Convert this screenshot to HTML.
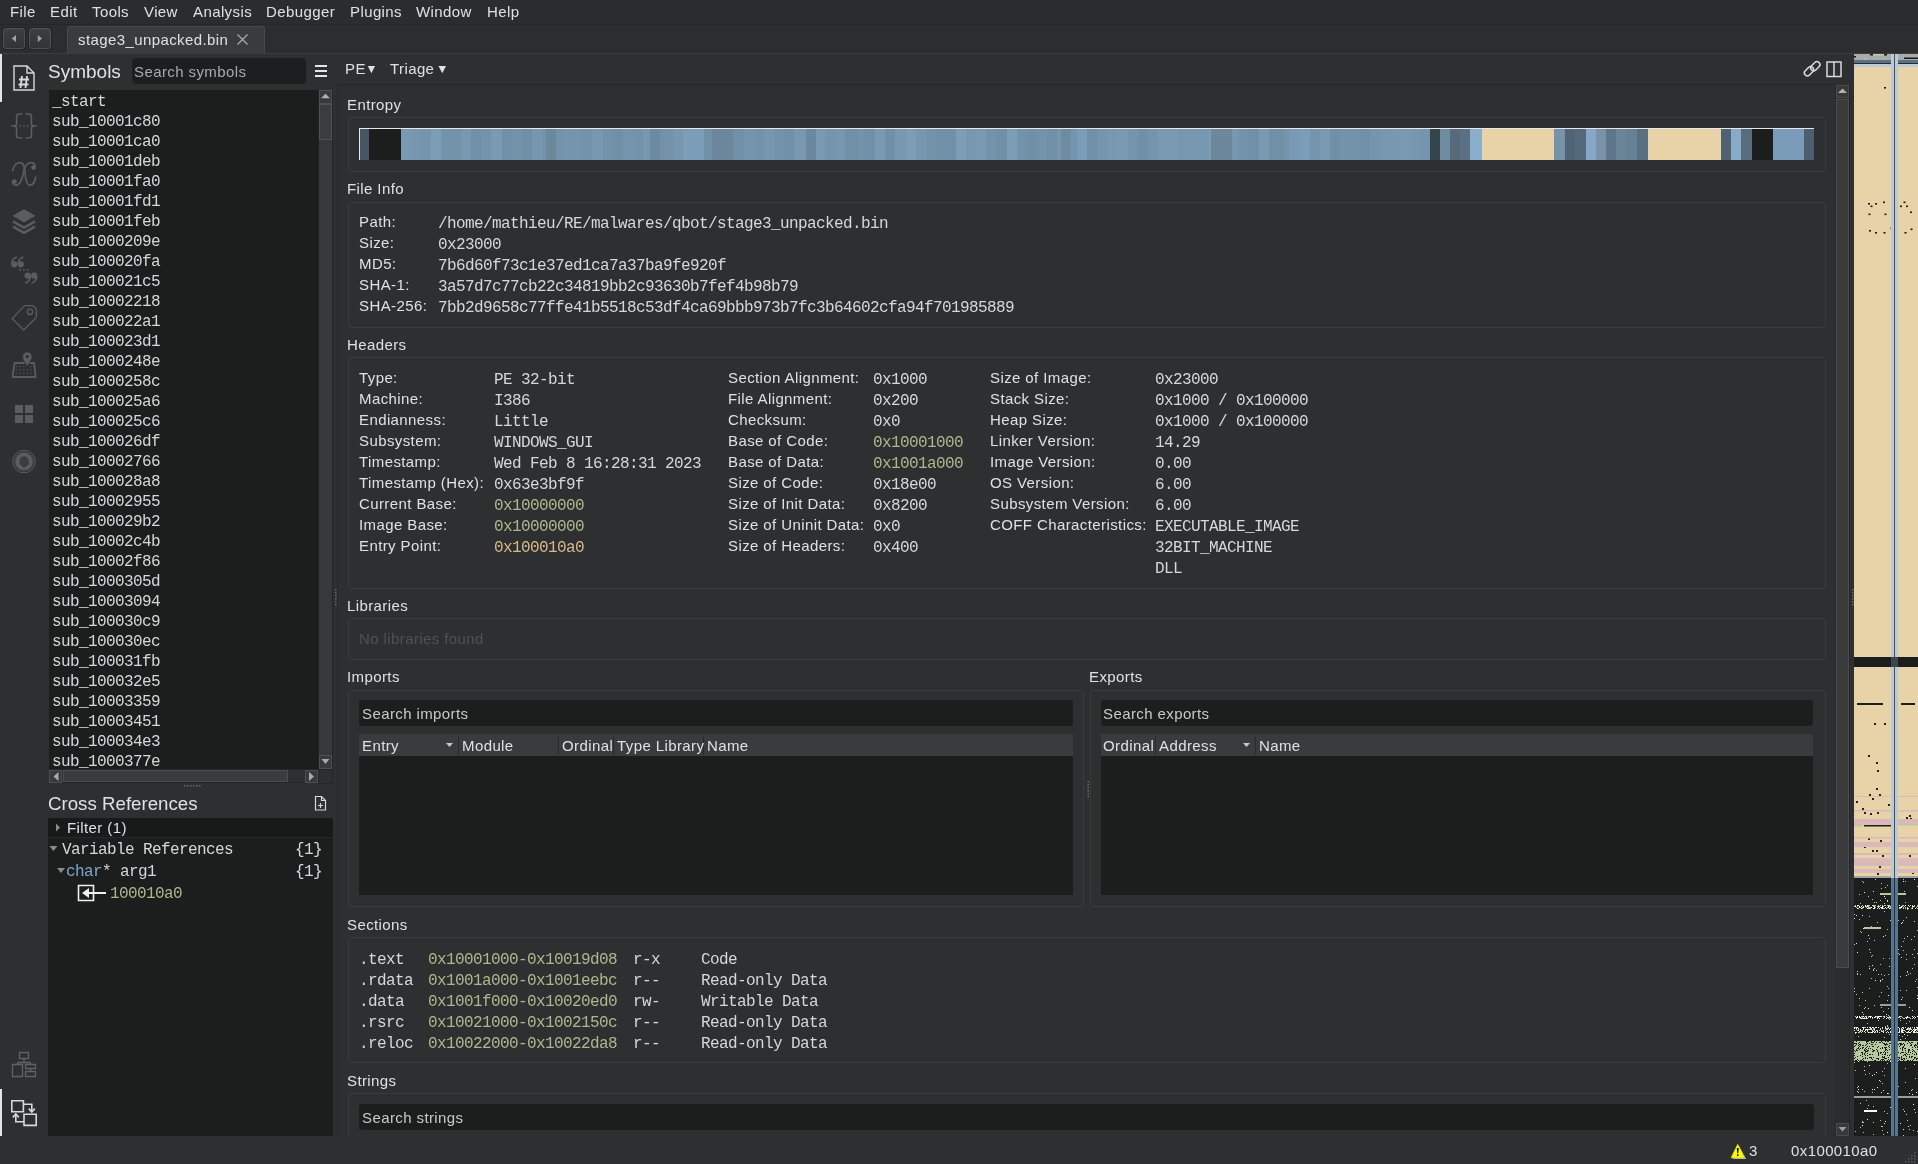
<!DOCTYPE html>
<html><head><meta charset="utf-8"><title>Binary Ninja</title>
<style>
html,body{margin:0;padding:0;}
body{width:1918px;height:1164px;overflow:hidden;position:relative;background:#2e2f31;font-family:"Liberation Sans",sans-serif;}
.r{position:absolute;box-sizing:border-box;}
.t{position:absolute;white-space:pre;line-height:20px;}
.s{font-family:"Liberation Sans",sans-serif;letter-spacing:0.4px;}
#root{position:absolute;left:0;top:0;width:1918px;height:1164px;will-change:transform;overflow:hidden;}
.m{font-family:"Liberation Mono",monospace;letter-spacing:-0.6px;}
svg{position:absolute;overflow:visible;}
</style></head><body><div id="root">
<div class="r" style="left:0px;top:0px;width:1918px;height:24px;background:#2b2c2e;"></div>
<div class="t s" style="left:10px;top:2px;font-size:15px;color:#dde1e6;">File</div>
<div class="t s" style="left:50px;top:2px;font-size:15px;color:#dde1e6;">Edit</div>
<div class="t s" style="left:92px;top:2px;font-size:15px;color:#dde1e6;">Tools</div>
<div class="t s" style="left:144px;top:2px;font-size:15px;color:#dde1e6;">View</div>
<div class="t s" style="left:193px;top:2px;font-size:15px;color:#dde1e6;">Analysis</div>
<div class="t s" style="left:266px;top:2px;font-size:15px;color:#dde1e6;">Debugger</div>
<div class="t s" style="left:350px;top:2px;font-size:15px;color:#dde1e6;">Plugins</div>
<div class="t s" style="left:416px;top:2px;font-size:15px;color:#dde1e6;">Window</div>
<div class="t s" style="left:487px;top:2px;font-size:15px;color:#dde1e6;">Help</div>
<div class="r" style="left:0px;top:24px;width:1918px;height:30px;background:#2c2d2f;border-top:1px solid #252628;"></div>
<div class="r" style="left:3px;top:28px;width:22px;height:21px;background:linear-gradient(#3d3e40,#333436);border:1px solid #505153;border-radius:3px;box-shadow:0 0 0 1px #222325;"></div>
<div class="r" style="left:29px;top:28px;width:22px;height:21px;background:linear-gradient(#3d3e40,#333436);border:1px solid #505153;border-radius:3px;box-shadow:0 0 0 1px #222325;"></div>
<svg style="left:0;top:0" width="1" height="1"><polygon points="11.8,38.5 16,35 16,42" fill="#a3a4a6"/><polygon points="37.8,35 42,38.5 37.8,42" fill="#a3a4a6"/></svg>
<div class="r" style="left:67px;top:26px;width:198px;height:28px;background:#3a3b3d;border:1px solid #48494b;border-bottom:none;border-radius:3px 3px 0 0;"></div>
<div class="t s" style="left:78px;top:30px;font-size:15px;color:#dde1e6;">stage3_unpacked.bin</div>
<svg style="left:0;top:0" width="1" height="1"><path d="M237.5,34.5 L247.5,44.5 M247.5,34.5 L237.5,44.5" stroke="#a8a9ab" stroke-width="1.3"/></svg>
<div class="r" style="left:0px;top:53px;width:67px;height:1px;background:#3c3d3f;"></div>
<div class="r" style="left:265px;top:53px;width:1653px;height:1px;background:#3c3d3f;"></div>
<div class="r" style="left:0px;top:54px;width:48px;height:1082px;background:#2e2f31;"></div>
<div class="r" style="left:0px;top:54px;width:2px;height:48px;background:#dfe3ea;"></div>
<div class="r" style="left:0px;top:1089px;width:2px;height:48px;background:#dfe3ea;"></div>

<svg style="left:0;top:0" width="1" height="1">
 <!-- symbols doc # -->
 <path d="M14,66 L27,66 L34,73 L34,90 L14,90 Z M27,66 L27,73 L34,73" fill="none" stroke="#d6d8db" stroke-width="1.4"/>
 <path d="M22,76 L20.5,88 M27,76 L25.5,88 M19,79.5 H29 M18.5,84.5 H28.5" stroke="#d6d8db" stroke-width="1.9" fill="none"/>
 <!-- braces -->
 <path d="M22.4,114 H19 Q16.6,114 16.6,116.4 V123.4 Q16.6,126 14,126 H11.2 M14,126 Q16.6,126 16.6,128.6 V135.6 Q16.6,138 19,138 H22.4 M25.6,114 H29 Q31.4,114 31.4,116.4 V123.4 Q31.4,126 34,126 H36.8 M34,126 Q31.4,126 31.4,128.6 V135.6 Q31.4,138 29,138 H25.6" fill="none" stroke="#5a5d60" stroke-width="1.6"/>
 <rect x="19.3" y="125.2" width="1.6" height="1.6" fill="#5a5d60"/><rect x="23.2" y="125.2" width="1.6" height="1.6" fill="#5a5d60"/><rect x="27.1" y="125.2" width="1.6" height="1.6" fill="#5a5d60"/>
 <!-- x -->
 <path d="M12.6,170.5 C14,164.5 17.5,162.2 20.5,162.6 C24,163.1 24.8,168 25,172 C25.5,180 27,185.2 30,185.2 C33,185.2 35,181 35.6,177" fill="none" stroke="#5a5d60" stroke-width="1.7" stroke-linecap="round"/>
 <path d="M35.2,168 C35.3,163.8 33,162.4 30.8,162.6 C27,163 24,167 23.5,172 C22.4,180 19.2,185.2 16,185.2 C13.5,185.2 12.2,183.5 12.6,181" fill="none" stroke="#5a5d60" stroke-width="1.7" stroke-linecap="round"/>
 <circle cx="33.5" cy="167.6" r="2.3" fill="#5a5d60"/><circle cx="14.4" cy="181.6" r="2.3" fill="#5a5d60"/>
 <!-- layers -->
 <polygon points="24,209.2 35.5,215.8 24,222.4 12.5,215.8" fill="#5a5d60"/>
 <path d="M13,221.3 L24,227.6 L35,221.3 M13,226.6 L24,232.9 L35,226.6" fill="none" stroke="#5a5d60" stroke-width="2.5"/>
 <!-- quotes -->
 <circle cx="14.3" cy="264.3" r="3.1" fill="#5a5d60"/><circle cx="20.8" cy="264.3" r="3.1" fill="#5a5d60"/>
 <path d="M11.6,264 C11.8,260.5 13.5,258 17,257 M18.1,264 C18.3,260.5 20,258 23.5,257" fill="none" stroke="#5a5d60" stroke-width="1.6"/>
 <circle cx="27.6" cy="275.6" r="3.1" fill="#5a5d60"/><circle cx="34.1" cy="275.6" r="3.1" fill="#5a5d60"/>
 <path d="M30.4,276 C30.2,279.5 28.5,282 25,283 M36.9,276 C36.7,279.5 35,282 31.5,283" fill="none" stroke="#5a5d60" stroke-width="1.6"/>
 <rect x="19.3" y="269" width="1.7" height="1.7" fill="#5a5d60"/><rect x="23.1" y="269" width="1.7" height="1.7" fill="#5a5d60"/><rect x="26.9" y="269" width="1.7" height="1.7" fill="#5a5d60"/>
 <!-- tag -->
 <path d="M12.2,318.6 L24.6,305.6 L33,305.6 L36.4,309.2 L36.4,317.4 L23.6,330 Z" fill="none" stroke="#5a5d60" stroke-width="1.3" stroke-linejoin="round"/>
 <circle cx="30" cy="311.8" r="2.7" fill="none" stroke="#5a5d60" stroke-width="1.3"/>
 <!-- map -->
 <path d="M14.6,363 L12.5,377 L35.6,377 L34.1,363 Z" fill="none" stroke="#5a5d60" stroke-width="1.8" stroke-linejoin="round"/>
 <path d="M16,366.5 h17 M16,370 h17 M16,373.5 h17" stroke="#5a5d60" stroke-width="0.9" stroke-dasharray="1.2,2.4" />
 <path d="M27.3,366.5 C24,361 22.6,359.5 22.6,356.6 a4.7,4.7 0 0 1 9.4,0 C32,359.5 30.6,361 27.3,366.5 Z" fill="#5a5d60" stroke="#2e2f31" stroke-width="0.8"/>
 <circle cx="27.3" cy="356.6" r="1.6" fill="#2e2f31"/>
 <!-- grid -->
 <rect x="15" y="405" width="8" height="8" fill="#5a5d60"/><rect x="25" y="405" width="8" height="8" fill="#5a5d60"/>
 <rect x="15" y="415" width="8" height="8" fill="#5a5d60"/><rect x="25" y="415" width="8" height="8" fill="#5a5d60"/>
 <!-- bug circle -->
 <circle cx="24" cy="461.6" r="11.3" fill="none" stroke="#5a5d60" stroke-width="1"/>
 <circle cx="24" cy="461.6" r="9" fill="#5a5d60"/>
 <circle cx="24" cy="461.6" r="9.8" fill="none" stroke="#45474a" stroke-width="0.8"/>
 <path d="M20,458 L24,456 L28,458 L29,464 L24,468 L19.5,464 Z" fill="#3a3c3f"/>
 <!-- hierarchy -->
 <path d="M19.5,1052.5 h9 v6 h-9 Z M24,1058.5 v4 M17.5,1062.5 h13 M17.5,1062.5 v2 M30.5,1062.5 v2 M12.5,1064.5 h10 v12 h-10 Z M25.5,1064.5 h10 v4 h-10 Z M30.5,1068.5 v3 M25.5,1071.5 h10 v5 h-10 Z" fill="none" stroke="#606264" stroke-width="1.3"/>
 <!-- xref -->
 <path d="M11.8,1100.8 h11.6 v11 h-11.6 Z M24,1114.2 h12.2 v11.2 h-12.2 Z M23.4,1104.3 h8.4 v7 M24,1121.8 h-8.2 v-7.2" fill="none" stroke="#d6d8db" stroke-width="1.6"/>
 <path d="M28.8,1108.6 L31.8,1112 L34.8,1108.6 M12.8,1117.4 L15.8,1114 L18.8,1117.4" fill="none" stroke="#d6d8db" stroke-width="1.6"/>
</svg>
<div class="r" style="left:48px;top:54px;width:285px;height:36px;background:#2e2f31;"></div>
<div class="t s" style="left:48px;top:62px;font-size:19px;color:#dfe1e4;letter-spacing:0">Symbols</div>
<div class="r" style="left:132px;top:58px;width:174px;height:26px;background:#1d1e1f;border-radius:4px;"></div>
<div class="t s" style="left:134px;top:62px;font-size:15px;color:#a9aaac;">Search symbols</div>
<svg style="left:0;top:0" width="1" height="1"><path d="M315,66 h12 M315,71 h12 M315,76 h12" stroke="#e2e5e9" stroke-width="1.8"/></svg>
<div class="r" style="left:49px;top:90px;width:269px;height:679px;background:#1c1d1d;"></div>
<div class="t m" style="left:52px;top:92px;font-size:16px;color:#d4d8dc;">_start</div>
<div class="t m" style="left:52px;top:112px;font-size:16px;color:#d4d8dc;">sub_10001c80</div>
<div class="t m" style="left:52px;top:132px;font-size:16px;color:#d4d8dc;">sub_10001ca0</div>
<div class="t m" style="left:52px;top:152px;font-size:16px;color:#d4d8dc;">sub_10001deb</div>
<div class="t m" style="left:52px;top:172px;font-size:16px;color:#d4d8dc;">sub_10001fa0</div>
<div class="t m" style="left:52px;top:192px;font-size:16px;color:#d4d8dc;">sub_10001fd1</div>
<div class="t m" style="left:52px;top:212px;font-size:16px;color:#d4d8dc;">sub_10001feb</div>
<div class="t m" style="left:52px;top:232px;font-size:16px;color:#d4d8dc;">sub_1000209e</div>
<div class="t m" style="left:52px;top:252px;font-size:16px;color:#d4d8dc;">sub_100020fa</div>
<div class="t m" style="left:52px;top:272px;font-size:16px;color:#d4d8dc;">sub_100021c5</div>
<div class="t m" style="left:52px;top:292px;font-size:16px;color:#d4d8dc;">sub_10002218</div>
<div class="t m" style="left:52px;top:312px;font-size:16px;color:#d4d8dc;">sub_100022a1</div>
<div class="t m" style="left:52px;top:332px;font-size:16px;color:#d4d8dc;">sub_100023d1</div>
<div class="t m" style="left:52px;top:352px;font-size:16px;color:#d4d8dc;">sub_1000248e</div>
<div class="t m" style="left:52px;top:372px;font-size:16px;color:#d4d8dc;">sub_1000258c</div>
<div class="t m" style="left:52px;top:392px;font-size:16px;color:#d4d8dc;">sub_100025a6</div>
<div class="t m" style="left:52px;top:412px;font-size:16px;color:#d4d8dc;">sub_100025c6</div>
<div class="t m" style="left:52px;top:432px;font-size:16px;color:#d4d8dc;">sub_100026df</div>
<div class="t m" style="left:52px;top:452px;font-size:16px;color:#d4d8dc;">sub_10002766</div>
<div class="t m" style="left:52px;top:472px;font-size:16px;color:#d4d8dc;">sub_100028a8</div>
<div class="t m" style="left:52px;top:492px;font-size:16px;color:#d4d8dc;">sub_10002955</div>
<div class="t m" style="left:52px;top:512px;font-size:16px;color:#d4d8dc;">sub_100029b2</div>
<div class="t m" style="left:52px;top:532px;font-size:16px;color:#d4d8dc;">sub_10002c4b</div>
<div class="t m" style="left:52px;top:552px;font-size:16px;color:#d4d8dc;">sub_10002f86</div>
<div class="t m" style="left:52px;top:572px;font-size:16px;color:#d4d8dc;">sub_1000305d</div>
<div class="t m" style="left:52px;top:592px;font-size:16px;color:#d4d8dc;">sub_10003094</div>
<div class="t m" style="left:52px;top:612px;font-size:16px;color:#d4d8dc;">sub_100030c9</div>
<div class="t m" style="left:52px;top:632px;font-size:16px;color:#d4d8dc;">sub_100030ec</div>
<div class="t m" style="left:52px;top:652px;font-size:16px;color:#d4d8dc;">sub_100031fb</div>
<div class="t m" style="left:52px;top:672px;font-size:16px;color:#d4d8dc;">sub_100032e5</div>
<div class="t m" style="left:52px;top:692px;font-size:16px;color:#d4d8dc;">sub_10003359</div>
<div class="t m" style="left:52px;top:712px;font-size:16px;color:#d4d8dc;">sub_10003451</div>
<div class="t m" style="left:52px;top:732px;font-size:16px;color:#d4d8dc;">sub_100034e3</div>
<div class="t m" style="left:52px;top:752px;font-size:16px;color:#d4d8dc;">sub_1000377e</div>
<div class="r" style="left:318px;top:90px;width:15px;height:679px;background:#37383a;border-left:1px solid #202122;border-right:1px solid #242527;"></div>
<div class="r" style="left:319px;top:90px;width:13px;height:14px;background:#38393b;border:1px solid #4e4f51;"></div>
<div class="r" style="left:319px;top:104px;width:13px;height:36px;background:#3b3c3e;border:1px solid #505153;"></div>
<div class="r" style="left:319px;top:755px;width:13px;height:14px;background:#38393b;border:1px solid #4e4f51;"></div>
<svg style="left:0;top:0" width="1" height="1"><polygon points="321,98.2 325.5,93.8 330,98.2" fill="#b0b1b3"/><polygon points="321.5,759 325.5,764 329.5,759" fill="#a8a9ab"/></svg>
<div class="r" style="left:49px;top:769px;width:284px;height:14px;background:#2e2f31;border-top:1px solid #242526;border-bottom:1px solid #242526;"></div>
<div class="r" style="left:49px;top:770px;width:13px;height:13px;background:#38393b;border:1px solid #4e4f51;"></div>
<div class="r" style="left:63px;top:770px;width:225px;height:12px;background:#3a3b3d;border:1px solid #4c4d4f;"></div>
<div class="r" style="left:305px;top:770px;width:13px;height:13px;background:#38393b;border:1px solid #4e4f51;"></div>
<div class="r" style="left:318px;top:769px;width:15px;height:15px;background:#2e2f31;border:1px solid #242526;"></div>
<svg style="left:0;top:0" width="1" height="1"><polygon points="58.5,772 53.5,776.5 58.5,781" fill="#a8a9ab"/><polygon points="309,772 314,776.5 309,781" fill="#a8a9ab"/></svg>
<svg style="left:0;top:0" width="1" height="1"><rect x="184" y="785" width="1.5" height="1.5" fill="#6a6b6d"/><rect x="187" y="785" width="1.5" height="1.5" fill="#6a6b6d"/><rect x="190" y="785" width="1.5" height="1.5" fill="#6a6b6d"/><rect x="193" y="785" width="1.5" height="1.5" fill="#6a6b6d"/><rect x="196" y="785" width="1.5" height="1.5" fill="#6a6b6d"/><rect x="199" y="785" width="1.5" height="1.5" fill="#6a6b6d"/></svg>
<div class="t s" style="left:48px;top:794px;font-size:18.7px;color:#dfe1e4;letter-spacing:0">Cross References</div>
<svg style="left:0;top:0" width="1" height="1"><path d="M315.5,796.5 h6 l4,4 v9.5 h-10 Z M321.5,796.5 v4 h4" fill="none" stroke="#d6d8db" stroke-width="1.2"/><path d="M320.5,803 v5 M318,805.5 h5" stroke="#d6d8db" stroke-width="1.2"/></svg>
<div class="r" style="left:48px;top:818px;width:285px;height:318px;background:#1c1d1d;"></div>
<div class="r" style="left:48px;top:818px;width:285px;height:19px;background:#181919;"></div>
<div class="r" style="left:48px;top:837px;width:285px;height:1px;background:#262728;"></div>
<svg style="left:0;top:0" width="1" height="1"><polygon points="56,823.5 60,827.5 56,831.5" fill="#8a8b8d"/><polygon points="49.5,846 57.5,846 53.5,851" fill="#8a8b8d"/><polygon points="57,868 65,868 61,873" fill="#8a8b8d"/></svg>
<div class="t s" style="left:67px;top:818px;font-size:15px;color:#dde1e6;">Filter (1)</div>
<div class="t m" style="left:62px;top:840px;font-size:16px;color:#d4d8dc;">Variable References</div>
<div class="t m" style="left:295px;top:840px;font-size:16px;color:#d4d8dc;">{1}</div>
<div class="t m" style="left:66px;top:862px;font-size:16px;color:#7ea5c8;">char</div>
<div class="t m" style="left:102px;top:862px;font-size:16px;color:#d4d8dc;">* arg1</div>
<div class="t m" style="left:295px;top:862px;font-size:16px;color:#d4d8dc;">{1}</div>
<svg style="left:0;top:0" width="1" height="1"><path d="M78.5,885.5 h15 v15 h-15 Z" fill="none" stroke="#f0f0f0" stroke-width="1.6"/><path d="M84,893 h22" stroke="#f0f0f0" stroke-width="2"/><polygon points="82,893 89,888 89,898" fill="#f0f0f0"/></svg>
<div class="t m" style="left:110px;top:884px;font-size:16px;color:#a8ba8d;">100010a0</div>
<div class="r" style="left:333px;top:54px;width:4px;height:1082px;background:#2e2f31;"></div>
<svg style="left:0;top:0" width="1" height="1"><rect x="335" y="589" width="1.5" height="1.5" fill="#6a6b6d"/><rect x="335" y="592" width="1.5" height="1.5" fill="#6a6b6d"/><rect x="335" y="595" width="1.5" height="1.5" fill="#6a6b6d"/><rect x="335" y="598" width="1.5" height="1.5" fill="#6a6b6d"/><rect x="335" y="601" width="1.5" height="1.5" fill="#6a6b6d"/><rect x="335" y="604" width="1.5" height="1.5" fill="#6a6b6d"/></svg>
<div class="r" style="left:338px;top:54px;width:1515px;height:30px;background:#2e2f31;"></div>
<div class="t s" style="left:345px;top:59px;font-size:15px;color:#dde1e6;">PE</div>
<div class="t s" style="left:390px;top:59px;font-size:15px;color:#dde1e6;">Triage</div>
<svg style="left:0;top:0" width="1" height="1"><polygon points="367.8,66 375,66 371.4,73.3" fill="#dde1e6"/><polygon points="438.5,66 446,66 442.25,73.3" fill="#dde1e6"/></svg>
<svg style="left:0;top:0" width="1" height="1">
<g fill="none" stroke="#d8dadd" stroke-width="1.5">
<rect x="1803.75" y="68.25" width="10.5" height="6" rx="3" transform="rotate(-45 1809 71.25)"/>
<rect x="1810.05" y="63.3" width="10.5" height="6" rx="3" transform="rotate(-45 1815.3 66.3)"/>
<rect x="1827" y="62" width="14" height="14.5"/>
<path d="M1834,62 v14.5"/>
</g></svg>
<div class="r" style="left:337px;top:84px;width:1499px;height:1052px;background:#2e2f31;border-top:1px solid #262729;border-left:1px solid #262729;"></div>
<div class="r" style="left:1835px;top:85px;width:16px;height:1051px;background:#2b2c2e;border-left:1px solid #27282a;"></div>
<div class="r" style="left:1836px;top:85px;width:13px;height:13px;background:#38393b;border:1px solid #4a4b4d;"></div>
<div class="r" style="left:1836px;top:99px;width:13px;height:869px;background:#3a3b3d;border:1px solid #4c4d4f;"></div>
<div class="r" style="left:1836px;top:1123px;width:13px;height:13px;background:#38393b;border:1px solid #4a4b4d;"></div>
<div class="r" style="left:1849px;top:85px;width:1px;height:1051px;background:#242527;"></div>
<div class="r" style="left:1850px;top:54px;width:4px;height:1082px;background:#2e2f31;"></div>
<svg style="left:0;top:0" width="1" height="1"><polygon points="1838,93 1842.5,88.6 1847,93" fill="#b0b1b3"/><polygon points="1838.5,1127 1842.5,1131.5 1846.5,1127" fill="#9c9d9f"/></svg>
<div class="t s" style="left:347px;top:95px;font-size:15px;color:#dde1e6;">Entropy</div>
<div class="r" style="left:348px;top:117px;width:1478px;height:55px;background:#2e2f31;border:1px solid #3a3b3d;border-radius:3px;"></div>
<svg style="left:0;top:0" width="1" height="1" shape-rendering="crispEdges"><rect x="401" y="129" width="10" height="31" fill="#7a9ab4"/><rect x="411" y="129" width="10" height="31" fill="#7797b0"/><rect x="421" y="129" width="10" height="31" fill="#7595ae"/><rect x="431" y="129" width="10" height="31" fill="#7c9db8"/><rect x="441" y="129" width="10" height="31" fill="#7393ab"/><rect x="451" y="129" width="10" height="31" fill="#7393ab"/><rect x="461" y="129" width="10" height="31" fill="#7898b2"/><rect x="471" y="129" width="10" height="31" fill="#7090a8"/><rect x="481" y="129" width="10" height="31" fill="#7393ab"/><rect x="491" y="129" width="11" height="31" fill="#7a9ab4"/><rect x="502" y="129" width="10" height="31" fill="#7090a8"/><rect x="512" y="129" width="10" height="31" fill="#7393ab"/><rect x="522" y="129" width="10" height="31" fill="#7090a8"/><rect x="532" y="129" width="10" height="31" fill="#7797b0"/><rect x="542" y="129" width="10" height="31" fill="#7393ab"/><rect x="552" y="129" width="10" height="31" fill="#7393ab"/><rect x="562" y="129" width="10" height="31" fill="#7595ae"/><rect x="572" y="129" width="10" height="31" fill="#7595ae"/><rect x="582" y="129" width="10" height="31" fill="#7393ab"/><rect x="592" y="129" width="11" height="31" fill="#7797b0"/><rect x="603" y="129" width="10" height="31" fill="#7393ab"/><rect x="613" y="129" width="10" height="31" fill="#7090a8"/><rect x="623" y="129" width="10" height="31" fill="#7595ae"/><rect x="633" y="129" width="10" height="31" fill="#7393ab"/><rect x="643" y="129" width="10" height="31" fill="#7898b2"/><rect x="653" y="129" width="10" height="31" fill="#7090a8"/><rect x="663" y="129" width="10" height="31" fill="#7393ab"/><rect x="673" y="129" width="10" height="31" fill="#7797b0"/><rect x="683" y="129" width="10" height="31" fill="#7c9db8"/><rect x="693" y="129" width="11" height="31" fill="#7c9db8"/><rect x="704" y="129" width="10" height="31" fill="#7090a8"/><rect x="714" y="129" width="10" height="31" fill="#7393ab"/><rect x="724" y="129" width="10" height="31" fill="#7090a8"/><rect x="734" y="129" width="10" height="31" fill="#7090a8"/><rect x="744" y="129" width="10" height="31" fill="#7595ae"/><rect x="754" y="129" width="10" height="31" fill="#7393ab"/><rect x="764" y="129" width="10" height="31" fill="#7797b0"/><rect x="774" y="129" width="10" height="31" fill="#7393ab"/><rect x="784" y="129" width="10" height="31" fill="#7090a8"/><rect x="794" y="129" width="11" height="31" fill="#7898b2"/><rect x="805" y="129" width="10" height="31" fill="#7797b0"/><rect x="815" y="129" width="10" height="31" fill="#7a9ab4"/><rect x="825" y="129" width="10" height="31" fill="#7595ae"/><rect x="835" y="129" width="10" height="31" fill="#7797b0"/><rect x="845" y="129" width="10" height="31" fill="#7090a8"/><rect x="855" y="129" width="10" height="31" fill="#7393ab"/><rect x="865" y="129" width="10" height="31" fill="#7090a8"/><rect x="875" y="129" width="10" height="31" fill="#7a9ab4"/><rect x="885" y="129" width="10" height="31" fill="#7090a8"/><rect x="895" y="129" width="11" height="31" fill="#7898b2"/><rect x="906" y="129" width="10" height="31" fill="#7c9db8"/><rect x="916" y="129" width="10" height="31" fill="#7797b0"/><rect x="926" y="129" width="10" height="31" fill="#7393ab"/><rect x="936" y="129" width="10" height="31" fill="#7090a8"/><rect x="946" y="129" width="10" height="31" fill="#7090a8"/><rect x="956" y="129" width="10" height="31" fill="#7c9db8"/><rect x="966" y="129" width="10" height="31" fill="#7797b0"/><rect x="976" y="129" width="10" height="31" fill="#7a9ab4"/><rect x="986" y="129" width="10" height="31" fill="#7393ab"/><rect x="996" y="129" width="11" height="31" fill="#7090a8"/><rect x="1007" y="129" width="10" height="31" fill="#7c9db8"/><rect x="1017" y="129" width="10" height="31" fill="#7393ab"/><rect x="1027" y="129" width="10" height="31" fill="#7090a8"/><rect x="1037" y="129" width="10" height="31" fill="#7393ab"/><rect x="1047" y="129" width="10" height="31" fill="#7090a8"/><rect x="1057" y="129" width="10" height="31" fill="#7797b0"/><rect x="1067" y="129" width="10" height="31" fill="#7595ae"/><rect x="1077" y="129" width="10" height="31" fill="#7c9db8"/><rect x="1087" y="129" width="10" height="31" fill="#7090a8"/><rect x="1097" y="129" width="11" height="31" fill="#7595ae"/><rect x="1108" y="129" width="10" height="31" fill="#7898b2"/><rect x="1118" y="129" width="10" height="31" fill="#7a9ab4"/><rect x="1128" y="129" width="10" height="31" fill="#7595ae"/><rect x="1138" y="129" width="10" height="31" fill="#7090a8"/><rect x="1148" y="129" width="10" height="31" fill="#7595ae"/><rect x="1158" y="129" width="10" height="31" fill="#7a9ab4"/><rect x="1168" y="129" width="10" height="31" fill="#7a9ab4"/><rect x="1178" y="129" width="10" height="31" fill="#7797b0"/><rect x="1188" y="129" width="10" height="31" fill="#7898b2"/><rect x="1198" y="129" width="11" height="31" fill="#7797b0"/><rect x="1209" y="129" width="10" height="31" fill="#7c9db8"/><rect x="1219" y="129" width="10" height="31" fill="#7898b2"/><rect x="1229" y="129" width="10" height="31" fill="#7797b0"/><rect x="1239" y="129" width="10" height="31" fill="#7393ab"/><rect x="1249" y="129" width="10" height="31" fill="#7090a8"/><rect x="1259" y="129" width="10" height="31" fill="#7a9ab4"/><rect x="1269" y="129" width="10" height="31" fill="#7090a8"/><rect x="1279" y="129" width="10" height="31" fill="#7595ae"/><rect x="1289" y="129" width="10" height="31" fill="#7a9ab4"/><rect x="1299" y="129" width="11" height="31" fill="#7c9db8"/><rect x="1310" y="129" width="10" height="31" fill="#7595ae"/><rect x="1320" y="129" width="10" height="31" fill="#7a9ab4"/><rect x="1330" y="129" width="10" height="31" fill="#7090a8"/><rect x="1340" y="129" width="10" height="31" fill="#7393ab"/><rect x="1350" y="129" width="10" height="31" fill="#7393ab"/><rect x="1360" y="129" width="10" height="31" fill="#7090a8"/><rect x="1370" y="129" width="10" height="31" fill="#7595ae"/><rect x="1380" y="129" width="10" height="31" fill="#7797b0"/><rect x="1390" y="129" width="10" height="31" fill="#7898b2"/><rect x="1400" y="129" width="11" height="31" fill="#7a9ab4"/><rect x="1411" y="129" width="10" height="31" fill="#7797b0"/><rect x="1421" y="129" width="10" height="31" fill="#7595ae"/><rect x="360" y="129" width="9" height="31" fill="#465764"/><rect x="369" y="129" width="32" height="31" fill="#1c1d1d"/><rect x="546" y="129" width="10" height="31" fill="#6c889d"/><rect x="650" y="129" width="10" height="31" fill="#6e8aa0"/><rect x="712" y="129" width="21" height="31" fill="#6c879c"/><rect x="806" y="129" width="10" height="31" fill="#6c889e"/><rect x="848" y="129" width="10" height="31" fill="#7190a7"/><rect x="1061" y="129" width="10" height="31" fill="#6e8ba1"/><rect x="1211" y="129" width="21" height="31" fill="#6d889d"/><rect x="1273" y="129" width="11" height="31" fill="#7090a6"/><rect x="1430" y="129" width="10" height="31" fill="#36444c"/><rect x="1440" y="129" width="10" height="31" fill="#6f8ca0"/><rect x="1450" y="129" width="10" height="31" fill="#566a7a"/><rect x="1460" y="129" width="10" height="31" fill="#5c7083"/><rect x="1470" y="129" width="12" height="31" fill="#8aafcc"/><rect x="1482" y="129" width="72" height="31" fill="#e8d2a8"/><rect x="1554" y="129" width="11" height="31" fill="#7693a8"/><rect x="1565" y="129" width="10" height="31" fill="#4f6476"/><rect x="1575" y="129" width="11" height="31" fill="#55697b"/><rect x="1586" y="129" width="10" height="31" fill="#86a8c4"/><rect x="1596" y="129" width="10" height="31" fill="#7792a9"/><rect x="1606" y="129" width="10" height="31" fill="#5f768a"/><rect x="1616" y="129" width="10" height="31" fill="#6a8498"/><rect x="1626" y="129" width="11" height="31" fill="#678194"/><rect x="1637" y="129" width="11" height="31" fill="#5a6f82"/><rect x="1648" y="129" width="73" height="31" fill="#e8d2a8"/><rect x="1721" y="129" width="10" height="31" fill="#4f6272"/><rect x="1731" y="129" width="10" height="31" fill="#88abc8"/><rect x="1741" y="129" width="11" height="31" fill="#576c7c"/><rect x="1752" y="129" width="21" height="31" fill="#1c1d1d"/><rect x="1773" y="129" width="31" height="31" fill="#7b9cb8"/><rect x="1804" y="129" width="10" height="31" fill="#4d5f6e"/><rect x="359" y="128" width="1455" height="1" fill="#e6e8ea"/><rect x="359" y="128" width="1" height="32" fill="#e6e8ea"/></svg>
<div class="t s" style="left:347px;top:179px;font-size:15px;color:#dde1e6;">File Info</div>
<div class="r" style="left:348px;top:202px;width:1478px;height:126px;background:#2e2f31;border:1px solid #3a3b3d;border-radius:3px;"></div>
<div class="t s" style="left:359px;top:212px;font-size:15px;color:#dde1e6;">Path:</div>
<div class="t m" style="left:438px;top:214px;font-size:16px;color:#d4d8dc;">/home/mathieu/RE/malwares/qbot/stage3_unpacked.bin</div>
<div class="t s" style="left:359px;top:233px;font-size:15px;color:#dde1e6;">Size:</div>
<div class="t m" style="left:438px;top:235px;font-size:16px;color:#d4d8dc;">0x23000</div>
<div class="t s" style="left:359px;top:254px;font-size:15px;color:#dde1e6;">MD5:</div>
<div class="t m" style="left:438px;top:256px;font-size:16px;color:#d4d8dc;">7b6d60f73c1e37ed1ca7a37ba9fe920f</div>
<div class="t s" style="left:359px;top:275px;font-size:15px;color:#dde1e6;">SHA-1:</div>
<div class="t m" style="left:438px;top:277px;font-size:16px;color:#d4d8dc;">3a57d7c77cb22c34819bb2c93630b7fef4b98b79</div>
<div class="t s" style="left:359px;top:296px;font-size:15px;color:#dde1e6;">SHA-256:</div>
<div class="t m" style="left:438px;top:298px;font-size:16px;color:#d4d8dc;">7bb2d9658c77ffe41b5518c53df4ca69bbb973b7fc3b64602cfa94f701985889</div>
<div class="t s" style="left:347px;top:335px;font-size:15px;color:#dde1e6;">Headers</div>
<div class="r" style="left:348px;top:357px;width:1478px;height:232px;background:#2e2f31;border:1px solid #3a3b3d;border-radius:3px;"></div>
<div class="t s" style="left:359px;top:368px;font-size:15px;color:#dde1e6;">Type:</div>
<div class="t m" style="left:494px;top:370px;font-size:16px;color:#d4d8dc;">PE 32-bit</div>
<div class="t s" style="left:359px;top:389px;font-size:15px;color:#dde1e6;">Machine:</div>
<div class="t m" style="left:494px;top:391px;font-size:16px;color:#d4d8dc;">I386</div>
<div class="t s" style="left:359px;top:410px;font-size:15px;color:#dde1e6;">Endianness:</div>
<div class="t m" style="left:494px;top:412px;font-size:16px;color:#d4d8dc;">Little</div>
<div class="t s" style="left:359px;top:431px;font-size:15px;color:#dde1e6;">Subsystem:</div>
<div class="t m" style="left:494px;top:433px;font-size:16px;color:#d4d8dc;">WINDOWS_GUI</div>
<div class="t s" style="left:359px;top:452px;font-size:15px;color:#dde1e6;">Timestamp:</div>
<div class="t m" style="left:494px;top:454px;font-size:16px;color:#d4d8dc;">Wed Feb 8 16:28:31 2023</div>
<div class="t s" style="left:359px;top:473px;font-size:15px;color:#dde1e6;">Timestamp (Hex):</div>
<div class="t m" style="left:494px;top:475px;font-size:16px;color:#d4d8dc;">0x63e3bf9f</div>
<div class="t s" style="left:359px;top:494px;font-size:15px;color:#dde1e6;">Current Base:</div>
<div class="t m" style="left:494px;top:496px;font-size:16px;color:#a8ba8d;">0x10000000</div>
<div class="t s" style="left:359px;top:515px;font-size:15px;color:#dde1e6;">Image Base:</div>
<div class="t m" style="left:494px;top:517px;font-size:16px;color:#a8ba8d;">0x10000000</div>
<div class="t s" style="left:359px;top:536px;font-size:15px;color:#dde1e6;">Entry Point:</div>
<div class="t m" style="left:494px;top:538px;font-size:16px;color:#d8b98a;">0x100010a0</div>
<div class="t s" style="left:728px;top:368px;font-size:15px;color:#dde1e6;">Section Alignment:</div>
<div class="t m" style="left:873px;top:370px;font-size:16px;color:#d4d8dc;">0x1000</div>
<div class="t s" style="left:728px;top:389px;font-size:15px;color:#dde1e6;">File Alignment:</div>
<div class="t m" style="left:873px;top:391px;font-size:16px;color:#d4d8dc;">0x200</div>
<div class="t s" style="left:728px;top:410px;font-size:15px;color:#dde1e6;">Checksum:</div>
<div class="t m" style="left:873px;top:412px;font-size:16px;color:#d4d8dc;">0x0</div>
<div class="t s" style="left:728px;top:431px;font-size:15px;color:#dde1e6;">Base of Code:</div>
<div class="t m" style="left:873px;top:433px;font-size:16px;color:#a8ba8d;">0x10001000</div>
<div class="t s" style="left:728px;top:452px;font-size:15px;color:#dde1e6;">Base of Data:</div>
<div class="t m" style="left:873px;top:454px;font-size:16px;color:#a8ba8d;">0x1001a000</div>
<div class="t s" style="left:728px;top:473px;font-size:15px;color:#dde1e6;">Size of Code:</div>
<div class="t m" style="left:873px;top:475px;font-size:16px;color:#d4d8dc;">0x18e00</div>
<div class="t s" style="left:728px;top:494px;font-size:15px;color:#dde1e6;">Size of Init Data:</div>
<div class="t m" style="left:873px;top:496px;font-size:16px;color:#d4d8dc;">0x8200</div>
<div class="t s" style="left:728px;top:515px;font-size:15px;color:#dde1e6;">Size of Uninit Data:</div>
<div class="t m" style="left:873px;top:517px;font-size:16px;color:#d4d8dc;">0x0</div>
<div class="t s" style="left:728px;top:536px;font-size:15px;color:#dde1e6;">Size of Headers:</div>
<div class="t m" style="left:873px;top:538px;font-size:16px;color:#d4d8dc;">0x400</div>
<div class="t s" style="left:990px;top:368px;font-size:15px;color:#dde1e6;">Size of Image:</div>
<div class="t m" style="left:1155px;top:370px;font-size:16px;color:#d4d8dc;">0x23000</div>
<div class="t s" style="left:990px;top:389px;font-size:15px;color:#dde1e6;">Stack Size:</div>
<div class="t m" style="left:1155px;top:391px;font-size:16px;color:#d4d8dc;">0x1000 / 0x100000</div>
<div class="t s" style="left:990px;top:410px;font-size:15px;color:#dde1e6;">Heap Size:</div>
<div class="t m" style="left:1155px;top:412px;font-size:16px;color:#d4d8dc;">0x1000 / 0x100000</div>
<div class="t s" style="left:990px;top:431px;font-size:15px;color:#dde1e6;">Linker Version:</div>
<div class="t m" style="left:1155px;top:433px;font-size:16px;color:#d4d8dc;">14.29</div>
<div class="t s" style="left:990px;top:452px;font-size:15px;color:#dde1e6;">Image Version:</div>
<div class="t m" style="left:1155px;top:454px;font-size:16px;color:#d4d8dc;">0.00</div>
<div class="t s" style="left:990px;top:473px;font-size:15px;color:#dde1e6;">OS Version:</div>
<div class="t m" style="left:1155px;top:475px;font-size:16px;color:#d4d8dc;">6.00</div>
<div class="t s" style="left:990px;top:494px;font-size:15px;color:#dde1e6;">Subsystem Version:</div>
<div class="t m" style="left:1155px;top:496px;font-size:16px;color:#d4d8dc;">6.00</div>
<div class="t s" style="left:990px;top:515px;font-size:15px;color:#dde1e6;">COFF Characteristics:</div>
<div class="t m" style="left:1155px;top:517px;font-size:16px;color:#d4d8dc;">EXECUTABLE_IMAGE</div>
<div class="t m" style="left:1155px;top:538px;font-size:16px;color:#d4d8dc;">32BIT_MACHINE</div>
<div class="t m" style="left:1155px;top:559px;font-size:16px;color:#d4d8dc;">DLL</div>
<div class="t s" style="left:347px;top:596px;font-size:15px;color:#dde1e6;">Libraries</div>
<div class="r" style="left:348px;top:618px;width:1478px;height:42px;background:#2e2f31;border:1px solid #3a3b3d;border-radius:3px;"></div>
<div class="t s" style="left:359px;top:629px;font-size:15px;color:#505153;">No libraries found</div>
<div class="t s" style="left:347px;top:667px;font-size:15px;color:#dde1e6;">Imports</div>
<div class="r" style="left:348px;top:690px;width:736px;height:217px;background:#2e2f31;border:1px solid #3a3b3d;border-radius:3px;"></div>
<div class="t s" style="left:1089px;top:667px;font-size:15px;color:#dde1e6;">Exports</div>
<div class="r" style="left:1090px;top:690px;width:736px;height:217px;background:#2e2f31;border:1px solid #3a3b3d;border-radius:3px;"></div>
<div class="r" style="left:359px;top:700px;width:714px;height:26px;background:#1c1d1d;border-radius:3px;"></div>
<div class="t s" style="left:362px;top:704px;font-size:15px;color:#c8c9cb;">Search imports</div>
<div class="r" style="left:359px;top:734px;width:714px;height:22px;background:#3a3b3d;"></div>
<div class="r" style="left:359px;top:756px;width:714px;height:139px;background:#1c1d1d;"></div>
<div class="r" style="left:458px;top:736px;width:1px;height:19px;background:#2a2b2d;"></div>
<div class="r" style="left:558px;top:736px;width:1px;height:19px;background:#2a2b2d;"></div>
<div class="r" style="left:613px;top:736px;width:1px;height:19px;background:#2a2b2d;"></div>
<div class="r" style="left:703px;top:736px;width:1px;height:19px;background:#2a2b2d;"></div>
<div class="t s" style="left:362px;top:736px;font-size:15px;color:#dde1e6;">Entry</div>
<div class="t s" style="left:462px;top:736px;font-size:15px;color:#dde1e6;">Module</div>
<div class="t s" style="left:562px;top:736px;font-size:15px;color:#dde1e6;">Ordinal</div>
<div class="t s" style="left:617px;top:736px;font-size:15px;color:#dde1e6;">Type Library</div>
<div class="t s" style="left:707px;top:736px;font-size:15px;color:#dde1e6;">Name</div>
<div class="r" style="left:1101px;top:700px;width:712px;height:26px;background:#1c1d1d;border-radius:3px;"></div>
<div class="t s" style="left:1103px;top:704px;font-size:15px;color:#c8c9cb;">Search exports</div>
<div class="r" style="left:1101px;top:734px;width:712px;height:22px;background:#3a3b3d;"></div>
<div class="r" style="left:1101px;top:756px;width:712px;height:139px;background:#1c1d1d;"></div>
<div class="r" style="left:1155px;top:736px;width:1px;height:19px;background:#2a2b2d;"></div>
<div class="r" style="left:1255px;top:736px;width:1px;height:19px;background:#2a2b2d;"></div>
<div class="t s" style="left:1103px;top:736px;font-size:15px;color:#dde1e6;">Ordinal</div>
<div class="t s" style="left:1159px;top:736px;font-size:15px;color:#dde1e6;">Address</div>
<div class="t s" style="left:1259px;top:736px;font-size:15px;color:#dde1e6;">Name</div>
<svg style="left:0;top:0" width="1" height="1"><polygon points="446,743 453,743 449.5,747" fill="#c8c9cb"/><polygon points="1243,743 1250,743 1246.5,747" fill="#c8c9cb"/></svg>
<svg style="left:0;top:0" width="1" height="1"><rect x="1087.5" y="781" width="1.5" height="1.5" fill="#6a6b6d"/><rect x="1087.5" y="784" width="1.5" height="1.5" fill="#6a6b6d"/><rect x="1087.5" y="787" width="1.5" height="1.5" fill="#6a6b6d"/><rect x="1087.5" y="790" width="1.5" height="1.5" fill="#6a6b6d"/><rect x="1087.5" y="793" width="1.5" height="1.5" fill="#6a6b6d"/><rect x="1087.5" y="796" width="1.5" height="1.5" fill="#6a6b6d"/></svg>
<div class="t s" style="left:347px;top:915px;font-size:15px;color:#dde1e6;">Sections</div>
<div class="r" style="left:348px;top:937px;width:1478px;height:126px;background:#2e2f31;border:1px solid #3a3b3d;border-radius:3px;"></div>
<div class="t m" style="left:359px;top:950px;font-size:16px;color:#d4d8dc;">.text</div>
<div class="t m" style="left:428px;top:950px;font-size:16px;color:#a8ba8d;">0x10001000-0x10019d08</div>
<div class="t m" style="left:633px;top:950px;font-size:16px;color:#d4d8dc;">r-x</div>
<div class="t m" style="left:701px;top:950px;font-size:16px;color:#d4d8dc;">Code</div>
<div class="t m" style="left:359px;top:971px;font-size:16px;color:#d4d8dc;">.rdata</div>
<div class="t m" style="left:428px;top:971px;font-size:16px;color:#a8ba8d;">0x1001a000-0x1001eebc</div>
<div class="t m" style="left:633px;top:971px;font-size:16px;color:#d4d8dc;">r--</div>
<div class="t m" style="left:701px;top:971px;font-size:16px;color:#d4d8dc;">Read-only Data</div>
<div class="t m" style="left:359px;top:992px;font-size:16px;color:#d4d8dc;">.data</div>
<div class="t m" style="left:428px;top:992px;font-size:16px;color:#a8ba8d;">0x1001f000-0x10020ed0</div>
<div class="t m" style="left:633px;top:992px;font-size:16px;color:#d4d8dc;">rw-</div>
<div class="t m" style="left:701px;top:992px;font-size:16px;color:#d4d8dc;">Writable Data</div>
<div class="t m" style="left:359px;top:1013px;font-size:16px;color:#d4d8dc;">.rsrc</div>
<div class="t m" style="left:428px;top:1013px;font-size:16px;color:#a8ba8d;">0x10021000-0x1002150c</div>
<div class="t m" style="left:633px;top:1013px;font-size:16px;color:#d4d8dc;">r--</div>
<div class="t m" style="left:701px;top:1013px;font-size:16px;color:#d4d8dc;">Read-only Data</div>
<div class="t m" style="left:359px;top:1034px;font-size:16px;color:#d4d8dc;">.reloc</div>
<div class="t m" style="left:428px;top:1034px;font-size:16px;color:#a8ba8d;">0x10022000-0x10022da8</div>
<div class="t m" style="left:633px;top:1034px;font-size:16px;color:#d4d8dc;">r--</div>
<div class="t m" style="left:701px;top:1034px;font-size:16px;color:#d4d8dc;">Read-only Data</div>
<div class="t s" style="left:347px;top:1071px;font-size:15px;color:#dde1e6;">Strings</div>
<div class="r" style="left:348px;top:1093px;width:1478px;height:60px;background:#2e2f31;border:1px solid #3a3b3d;border-radius:3px;"></div>
<div class="r" style="left:359px;top:1104px;width:1455px;height:26px;background:#1c1d1d;border-radius:3px;"></div>
<div class="t s" style="left:362px;top:1108px;font-size:15px;color:#c8c9cb;">Search strings</div>
<svg style="left:0;top:0" width="1" height="1"><rect x="1852" y="589" width="1.5" height="1.5" fill="#6a6b6d"/><rect x="1852" y="592" width="1.5" height="1.5" fill="#6a6b6d"/><rect x="1852" y="595" width="1.5" height="1.5" fill="#6a6b6d"/><rect x="1852" y="598" width="1.5" height="1.5" fill="#6a6b6d"/><rect x="1852" y="601" width="1.5" height="1.5" fill="#6a6b6d"/><rect x="1852" y="604" width="1.5" height="1.5" fill="#6a6b6d"/></svg>
<svg style="left:0;top:0" width="1" height="1"><rect x="1854" y="54" width="64" height="6" fill="#a8aaac"/><rect x="1854" y="60" width="64" height="3" fill="#5a7085"/><rect x="1854" y="63" width="64" height="1" fill="#2a2b2d"/><rect x="1854" y="64" width="64" height="3" fill="#bccbd0"/><rect x="1854" y="67" width="64" height="811" fill="#e8d3a9"/><rect x="1884" y="87" width="2" height="1.6" fill="#1a1a1a"/><rect x="1868" y="203" width="2" height="1.6" fill="#1a1a1a"/><rect x="1870.5" y="205.5" width="2" height="1.6" fill="#1a1a1a"/><rect x="1875" y="203" width="2" height="1.6" fill="#1a1a1a"/><rect x="1883" y="201.5" width="2" height="1.6" fill="#1a1a1a"/><rect x="1868.5" y="213.5" width="2" height="1.6" fill="#1a1a1a"/><rect x="1884.5" y="213.5" width="2" height="1.6" fill="#1a1a1a"/><rect x="1869" y="230" width="2" height="1.6" fill="#1a1a1a"/><rect x="1875" y="232" width="2" height="1.6" fill="#1a1a1a"/><rect x="1883.5" y="232" width="2" height="1.6" fill="#1a1a1a"/><rect x="1903.5" y="201.5" width="2" height="1.6" fill="#1a1a1a"/><rect x="1900" y="205.5" width="2" height="1.6" fill="#1a1a1a"/><rect x="1906" y="205.5" width="2" height="1.6" fill="#1a1a1a"/><rect x="1910" y="211.5" width="2" height="1.6" fill="#1a1a1a"/><rect x="1910.5" y="228.5" width="2" height="1.6" fill="#1a1a1a"/><rect x="1904.5" y="232" width="2" height="1.6" fill="#1a1a1a"/><rect x="1890.5" y="227.5" width="2" height="1.6" fill="#1a1a1a"/><rect x="1870" y="54" width="3" height="1.5" fill="#1a1a1a"/><rect x="1884" y="54" width="3" height="1.5" fill="#1a1a1a"/><rect x="1873" y="54" width="11" height="1.5" fill="#b8d49a"/><rect x="1854" y="56" width="2" height="1.5" fill="#1a1a1a"/><rect x="1864" y="58" width="1" height="1.5" fill="#b8d49a"/><rect x="1874" y="58" width="1" height="1.5" fill="#b8d49a"/><rect x="1884" y="58" width="1" height="1.5" fill="#b8d49a"/><rect x="1916" y="58" width="1" height="1.5" fill="#b8d49a"/><rect x="1904" y="57.5" width="14" height="1.5" fill="#1a1a1a"/><rect x="1854" y="657" width="64" height="10" fill="#1c1d1d"/><rect x="1857" y="703" width="26" height="2" fill="#1c1d1d"/><rect x="1901" y="703" width="14" height="2" fill="#1c1d1d"/><rect x="1874" y="723" width="2" height="2" fill="#222"/><rect x="1884" y="723" width="2" height="2" fill="#222"/><rect x="1868" y="755" width="2" height="2" fill="#222"/><rect x="1876" y="762" width="2" height="2" fill="#222"/><rect x="1877" y="770" width="2" height="2" fill="#222"/><rect x="1876" y="788" width="2" height="2" fill="#222"/><rect x="1869" y="794" width="2" height="2" fill="#222"/><rect x="1872" y="798" width="2" height="2" fill="#222"/><rect x="1879" y="794" width="2" height="2" fill="#222"/><rect x="1856" y="801" width="2" height="2" fill="#222"/><rect x="1888" y="804" width="2" height="2" fill="#222"/><rect x="1862" y="808" width="2" height="2" fill="#222"/><rect x="1864" y="812" width="2" height="2" fill="#222"/><rect x="1870" y="813" width="2" height="2" fill="#222"/><rect x="1877" y="812" width="2" height="2" fill="#222"/><rect x="1909" y="815" width="2" height="2" fill="#222"/><rect x="1906" y="817" width="2" height="2" fill="#222"/><rect x="1910" y="818" width="2" height="2" fill="#222"/><rect x="1887" y="824" width="2" height="2" fill="#222"/><rect x="1868" y="838" width="2" height="2" fill="#222"/><rect x="1880" y="840" width="2" height="2" fill="#222"/><rect x="1875" y="844" width="2" height="2" fill="#222"/><rect x="1864" y="846" width="2" height="2" fill="#222"/><rect x="1872" y="850" width="2" height="2" fill="#222"/><rect x="1876" y="850" width="2" height="2" fill="#222"/><rect x="1882" y="855" width="2" height="2" fill="#222"/><rect x="1909" y="855" width="2" height="2" fill="#222"/><rect x="1879" y="866" width="2" height="2" fill="#222"/><rect x="1880" y="870" width="2" height="2" fill="#222"/><rect x="1912" y="872" width="2" height="2" fill="#222"/><rect x="1877" y="873" width="2" height="2" fill="#222"/><rect x="1854" y="796" width="64" height="1" fill="#dcb9b9"/><rect x="1854" y="810" width="64" height="1.5" fill="#dcb9b9"/><rect x="1854" y="819" width="64" height="6" fill="#dcb9b9"/><rect x="1854" y="837" width="64" height="1.5" fill="#dcb9b9"/><rect x="1854" y="842" width="64" height="5" fill="#dcb9b9"/><rect x="1854" y="853" width="64" height="2" fill="#dcb9b9"/><rect x="1854" y="858" width="64" height="8" fill="#dcb9b9"/><rect x="1854" y="869" width="64" height="4" fill="#dcb9b9"/><rect x="1864" y="825" width="28" height="1.5" fill="#1c1d1d"/><rect x="1854" y="825" width="8" height="1.5" fill="#b8c9a0"/><rect x="1898" y="824" width="20" height="1.5" fill="#b8c9a0"/><rect x="1854" y="876" width="64" height="2" fill="#9fa3a5"/><rect x="1854" y="878" width="64" height="258" fill="#1c1d1d"/><rect x="1875" y="879" width="1" height="1" fill="#b8c9a0"/><rect x="1903" y="879" width="1" height="1" fill="#b8c9a0"/><rect x="1914" y="879" width="1" height="1" fill="#e8e8e8"/><rect x="1862" y="881" width="1" height="1" fill="#b8c9a0"/><rect x="1903" y="881" width="1" height="1" fill="#e8e8e8"/><rect x="1905" y="881" width="1" height="1" fill="#b8c9a0"/><rect x="1863" y="882" width="1" height="1" fill="#b8c9a0"/><rect x="1881" y="883" width="1" height="1" fill="#b8c9a0"/><rect x="1887" y="885" width="1" height="1" fill="#b8c9a0"/><rect x="1917" y="886" width="1" height="1" fill="#b8c9a0"/><rect x="1885" y="887" width="1" height="1" fill="#b8c9a0"/><rect x="1881" y="888" width="1" height="1" fill="#b8c9a0"/><rect x="1873" y="891" width="1" height="1" fill="#e8e8e8"/><rect x="1904" y="891" width="1" height="1" fill="#b8c9a0"/><rect x="1864" y="892" width="1" height="1" fill="#e8e8e8"/><rect x="1905" y="893" width="1" height="1" fill="#b8c9a0"/><rect x="1859" y="894" width="1" height="1" fill="#b8c9a0"/><rect x="1892" y="895" width="1" height="1" fill="#b8c9a0"/><rect x="1868" y="896" width="1" height="1" fill="#b8c9a0"/><rect x="1884" y="896" width="1" height="1" fill="#e8e8e8"/><rect x="1895" y="897" width="1" height="1" fill="#e8e8e8"/><rect x="1885" y="898" width="1" height="1" fill="#b8c9a0"/><rect x="1872" y="899" width="1" height="1" fill="#b8c9a0"/><rect x="1880" y="900" width="1" height="1" fill="#b8c9a0"/><rect x="1887" y="900" width="1" height="1" fill="#e8e8e8"/><rect x="1897" y="900" width="1" height="1" fill="#b8c9a0"/><rect x="1887" y="901" width="1" height="1" fill="#b8c9a0"/><rect x="1874" y="902" width="1" height="1" fill="#b8c9a0"/><rect x="1876" y="902" width="1" height="1" fill="#b8c9a0"/><rect x="1905" y="902" width="1" height="1" fill="#b8c9a0"/><rect x="1860" y="903" width="1" height="1" fill="#b8c9a0"/><rect x="1884" y="903" width="1" height="1" fill="#b8c9a0"/><rect x="1872" y="905" width="1" height="1" fill="#b8c9a0"/><rect x="1888" y="905" width="1" height="1" fill="#b8c9a0"/><rect x="1856" y="907" width="1" height="1" fill="#b8c9a0"/><rect x="1892" y="907" width="1" height="1" fill="#b8c9a0"/><rect x="1907" y="909" width="1" height="1" fill="#b8c9a0"/><rect x="1884" y="911" width="1" height="1" fill="#b8c9a0"/><rect x="1854" y="914" width="1" height="1" fill="#b8c9a0"/><rect x="1856" y="915" width="1" height="1" fill="#e8e8e8"/><rect x="1862" y="915" width="1" height="1" fill="#e8e8e8"/><rect x="1869" y="916" width="1" height="1" fill="#b8c9a0"/><rect x="1906" y="917" width="1" height="1" fill="#b8c9a0"/><rect x="1854" y="918" width="1" height="1" fill="#e8e8e8"/><rect x="1859" y="919" width="1" height="1" fill="#b8c9a0"/><rect x="1890" y="920" width="1" height="1" fill="#b8c9a0"/><rect x="1898" y="920" width="1" height="1" fill="#b8c9a0"/><rect x="1903" y="920" width="1" height="1" fill="#b8c9a0"/><rect x="1914" y="921" width="1" height="1" fill="#b8c9a0"/><rect x="1877" y="922" width="1" height="1" fill="#b8c9a0"/><rect x="1902" y="922" width="1" height="1" fill="#e8e8e8"/><rect x="1901" y="923" width="1" height="1" fill="#e8e8e8"/><rect x="1871" y="926" width="1" height="1" fill="#b8c9a0"/><rect x="1863" y="928" width="1" height="1" fill="#e8e8e8"/><rect x="1887" y="929" width="1" height="1" fill="#b8c9a0"/><rect x="1917" y="930" width="1" height="1" fill="#b8c9a0"/><rect x="1860" y="931" width="1" height="1" fill="#b8c9a0"/><rect x="1897" y="931" width="1" height="1" fill="#b8c9a0"/><rect x="1861" y="932" width="1" height="1" fill="#b8c9a0"/><rect x="1868" y="935" width="1" height="1" fill="#e8e8e8"/><rect x="1885" y="935" width="1" height="1" fill="#b8c9a0"/><rect x="1883" y="936" width="1" height="1" fill="#e8e8e8"/><rect x="1907" y="936" width="1" height="1" fill="#b8c9a0"/><rect x="1914" y="936" width="1" height="1" fill="#b8c9a0"/><rect x="1869" y="938" width="1" height="1" fill="#b8c9a0"/><rect x="1904" y="938" width="1" height="1" fill="#b8c9a0"/><rect x="1911" y="939" width="1" height="1" fill="#b8c9a0"/><rect x="1874" y="940" width="1" height="1" fill="#b8c9a0"/><rect x="1867" y="941" width="1" height="1" fill="#b8c9a0"/><rect x="1903" y="941" width="1" height="1" fill="#b8c9a0"/><rect x="1891" y="942" width="1" height="1" fill="#e8e8e8"/><rect x="1897" y="942" width="1" height="1" fill="#b8c9a0"/><rect x="1856" y="943" width="1" height="1" fill="#e8e8e8"/><rect x="1854" y="944" width="1" height="1" fill="#b8c9a0"/><rect x="1891" y="945" width="1" height="1" fill="#b8c9a0"/><rect x="1901" y="946" width="1" height="1" fill="#b8c9a0"/><rect x="1896" y="948" width="1" height="1" fill="#e8e8e8"/><rect x="1869" y="949" width="1" height="1" fill="#e8e8e8"/><rect x="1898" y="949" width="1" height="1" fill="#b8c9a0"/><rect x="1914" y="949" width="1" height="1" fill="#b8c9a0"/><rect x="1903" y="950" width="1" height="1" fill="#b8c9a0"/><rect x="1891" y="951" width="1" height="1" fill="#e8e8e8"/><rect x="1897" y="951" width="1" height="1" fill="#e8e8e8"/><rect x="1857" y="952" width="1" height="1" fill="#e8e8e8"/><rect x="1870" y="952" width="1" height="1" fill="#b8c9a0"/><rect x="1898" y="953" width="1" height="1" fill="#b8c9a0"/><rect x="1917" y="953" width="1" height="1" fill="#b8c9a0"/><rect x="1899" y="954" width="1" height="1" fill="#b8c9a0"/><rect x="1906" y="954" width="1" height="1" fill="#b8c9a0"/><rect x="1912" y="954" width="1" height="1" fill="#b8c9a0"/><rect x="1872" y="955" width="1" height="1" fill="#b8c9a0"/><rect x="1895" y="955" width="1" height="1" fill="#e8e8e8"/><rect x="1871" y="956" width="1" height="1" fill="#b8c9a0"/><rect x="1901" y="957" width="1" height="1" fill="#b8c9a0"/><rect x="1914" y="957" width="1" height="1" fill="#b8c9a0"/><rect x="1883" y="958" width="1" height="1" fill="#b8c9a0"/><rect x="1889" y="958" width="1" height="1" fill="#b8c9a0"/><rect x="1894" y="959" width="1" height="1" fill="#e8e8e8"/><rect x="1906" y="959" width="1" height="1" fill="#b8c9a0"/><rect x="1880" y="964" width="1" height="1" fill="#b8c9a0"/><rect x="1914" y="964" width="1" height="1" fill="#b8c9a0"/><rect x="1872" y="965" width="1" height="1" fill="#e8e8e8"/><rect x="1869" y="966" width="1" height="1" fill="#b8c9a0"/><rect x="1889" y="966" width="1" height="1" fill="#e8e8e8"/><rect x="1869" y="968" width="1" height="1" fill="#e8e8e8"/><rect x="1874" y="968" width="1" height="1" fill="#b8c9a0"/><rect x="1912" y="968" width="1" height="1" fill="#b8c9a0"/><rect x="1873" y="969" width="1" height="1" fill="#b8c9a0"/><rect x="1873" y="970" width="1" height="1" fill="#b8c9a0"/><rect x="1876" y="970" width="1" height="1" fill="#b8c9a0"/><rect x="1857" y="971" width="1" height="1" fill="#b8c9a0"/><rect x="1907" y="971" width="1" height="1" fill="#b8c9a0"/><rect x="1897" y="972" width="1" height="1" fill="#b8c9a0"/><rect x="1907" y="972" width="1" height="1" fill="#b8c9a0"/><rect x="1857" y="973" width="1" height="1" fill="#b8c9a0"/><rect x="1910" y="973" width="1" height="1" fill="#b8c9a0"/><rect x="1857" y="974" width="1" height="1" fill="#b8c9a0"/><rect x="1860" y="974" width="1" height="1" fill="#b8c9a0"/><rect x="1878" y="974" width="1" height="1" fill="#b8c9a0"/><rect x="1881" y="974" width="1" height="1" fill="#b8c9a0"/><rect x="1888" y="974" width="1" height="1" fill="#b8c9a0"/><rect x="1908" y="974" width="1" height="1" fill="#b8c9a0"/><rect x="1884" y="975" width="1" height="1" fill="#b8c9a0"/><rect x="1906" y="975" width="1" height="1" fill="#e8e8e8"/><rect x="1900" y="976" width="1" height="1" fill="#b8c9a0"/><rect x="1871" y="978" width="1" height="1" fill="#b8c9a0"/><rect x="1882" y="979" width="1" height="1" fill="#e8e8e8"/><rect x="1916" y="979" width="1" height="1" fill="#b8c9a0"/><rect x="1875" y="980" width="1" height="1" fill="#e8e8e8"/><rect x="1880" y="980" width="1" height="1" fill="#e8e8e8"/><rect x="1880" y="981" width="1" height="1" fill="#b8c9a0"/><rect x="1915" y="981" width="1" height="1" fill="#b8c9a0"/><rect x="1887" y="986" width="1" height="1" fill="#b8c9a0"/><rect x="1917" y="987" width="1" height="1" fill="#b8c9a0"/><rect x="1854" y="988" width="1" height="1" fill="#b8c9a0"/><rect x="1869" y="988" width="1" height="1" fill="#b8c9a0"/><rect x="1888" y="988" width="1" height="1" fill="#b8c9a0"/><rect x="1892" y="988" width="1" height="1" fill="#b8c9a0"/><rect x="1900" y="990" width="1" height="1" fill="#b8c9a0"/><rect x="1906" y="990" width="1" height="1" fill="#b8c9a0"/><rect x="1854" y="991" width="1" height="1" fill="#b8c9a0"/><rect x="1862" y="992" width="1" height="1" fill="#b8c9a0"/><rect x="1881" y="992" width="1" height="1" fill="#b8c9a0"/><rect x="1893" y="992" width="1" height="1" fill="#b8c9a0"/><rect x="1856" y="994" width="1" height="1" fill="#b8c9a0"/><rect x="1888" y="995" width="1" height="1" fill="#e8e8e8"/><rect x="1896" y="995" width="1" height="1" fill="#b8c9a0"/><rect x="1917" y="995" width="1" height="1" fill="#b8c9a0"/><rect x="1879" y="996" width="1" height="1" fill="#b8c9a0"/><rect x="1902" y="997" width="1" height="1" fill="#b8c9a0"/><rect x="1859" y="998" width="1" height="1" fill="#b8c9a0"/><rect x="1917" y="998" width="1" height="1" fill="#e8e8e8"/><rect x="1901" y="999" width="1" height="1" fill="#e8e8e8"/><rect x="1865" y="1000" width="1" height="1" fill="#b8c9a0"/><rect x="1887" y="1000" width="1" height="1" fill="#b8c9a0"/><rect x="1859" y="1005" width="1" height="1" fill="#b8c9a0"/><rect x="1874" y="1005" width="1" height="1" fill="#b8c9a0"/><rect x="1892" y="1005" width="1" height="1" fill="#b8c9a0"/><rect x="1905" y="1005" width="1" height="1" fill="#e8e8e8"/><rect x="1865" y="1007" width="1" height="1" fill="#b8c9a0"/><rect x="1881" y="1007" width="1" height="1" fill="#b8c9a0"/><rect x="1909" y="1007" width="1" height="1" fill="#e8e8e8"/><rect x="1864" y="1008" width="1" height="1" fill="#b8c9a0"/><rect x="1868" y="1008" width="1" height="1" fill="#e8e8e8"/><rect x="1888" y="1008" width="1" height="1" fill="#b8c9a0"/><rect x="1894" y="1008" width="1" height="1" fill="#b8c9a0"/><rect x="1896" y="1008" width="1" height="1" fill="#b8c9a0"/><rect x="1912" y="1010" width="1" height="1" fill="#e8e8e8"/><rect x="1883" y="1011" width="1" height="1" fill="#b8c9a0"/><rect x="1862" y="1012" width="1" height="1" fill="#e8e8e8"/><rect x="1863" y="1014" width="1" height="1" fill="#b8c9a0"/><rect x="1886" y="1014" width="1" height="1" fill="#e8e8e8"/><rect x="1888" y="1015" width="1" height="1" fill="#b8c9a0"/><rect x="1898" y="1017" width="1" height="1" fill="#b8c9a0"/><rect x="1899" y="1017" width="1" height="1" fill="#b8c9a0"/><rect x="1905" y="1017" width="1" height="1" fill="#b8c9a0"/><rect x="1862" y="1018" width="1" height="1" fill="#b8c9a0"/><rect x="1897" y="1018" width="1" height="1" fill="#b8c9a0"/><rect x="1889" y="1019" width="1" height="1" fill="#b8c9a0"/><rect x="1878" y="1020" width="1" height="1" fill="#b8c9a0"/><rect x="1900" y="1020" width="1" height="1" fill="#b8c9a0"/><rect x="1909" y="1021" width="1" height="1" fill="#b8c9a0"/><rect x="1867" y="1023" width="1" height="1" fill="#b8c9a0"/><rect x="1906" y="1023" width="1" height="1" fill="#b8c9a0"/><rect x="1887" y="1025" width="1" height="1" fill="#b8c9a0"/><rect x="1885" y="1026" width="1" height="1" fill="#b8c9a0"/><rect x="1887" y="1026" width="1" height="1" fill="#b8c9a0"/><rect x="1908" y="1027" width="1" height="1" fill="#b8c9a0"/><rect x="1885" y="1028" width="1" height="1" fill="#b8c9a0"/><rect x="1888" y="1028" width="1" height="1" fill="#b8c9a0"/><rect x="1868" y="1029" width="1" height="1" fill="#b8c9a0"/><rect x="1893" y="1029" width="1" height="1" fill="#b8c9a0"/><rect x="1894" y="1030" width="1" height="1" fill="#b8c9a0"/><rect x="1903" y="1030" width="1" height="1" fill="#b8c9a0"/><rect x="1861" y="1032" width="1" height="1" fill="#b8c9a0"/><rect x="1913" y="1032" width="1" height="1" fill="#b8c9a0"/><rect x="1855" y="1033" width="1" height="1" fill="#b8c9a0"/><rect x="1889" y="1034" width="1" height="1" fill="#b8c9a0"/><rect x="1897" y="1034" width="1" height="1" fill="#b8c9a0"/><rect x="1904" y="1034" width="1" height="1" fill="#e8e8e8"/><rect x="1899" y="1035" width="1" height="1" fill="#b8c9a0"/><rect x="1907" y="1035" width="1" height="1" fill="#b8c9a0"/><rect x="1858" y="1036" width="1" height="1" fill="#b8c9a0"/><rect x="1902" y="1036" width="1" height="1" fill="#b8c9a0"/><rect x="1884" y="1037" width="1" height="1" fill="#b8c9a0"/><rect x="1905" y="1038" width="1" height="1" fill="#b8c9a0"/><rect x="1897" y="1039" width="1" height="1" fill="#b8c9a0"/><rect x="1900" y="1039" width="1" height="1" fill="#e8e8e8"/><rect x="1855" y="905" width="1" height="1" fill="#b8c9a0"/><rect x="1857" y="905" width="1" height="1" fill="#ffffff"/><rect x="1858" y="905" width="1" height="1" fill="#ffffff"/><rect x="1862" y="905" width="1" height="1" fill="#b8c9a0"/><rect x="1865" y="905" width="1" height="1" fill="#ffffff"/><rect x="1867" y="905" width="1" height="1" fill="#ffffff"/><rect x="1868" y="905" width="1" height="1" fill="#b8c9a0"/><rect x="1869" y="905" width="1" height="1" fill="#b8c9a0"/><rect x="1872" y="905" width="1" height="1" fill="#b8c9a0"/><rect x="1873" y="905" width="1" height="1" fill="#b8c9a0"/><rect x="1874" y="905" width="1" height="1" fill="#b8c9a0"/><rect x="1875" y="905" width="1" height="1" fill="#b8c9a0"/><rect x="1878" y="905" width="1" height="1" fill="#b8c9a0"/><rect x="1880" y="905" width="1" height="1" fill="#b8c9a0"/><rect x="1882" y="905" width="1" height="1" fill="#b8c9a0"/><rect x="1884" y="905" width="1" height="1" fill="#b8c9a0"/><rect x="1885" y="905" width="1" height="1" fill="#b8c9a0"/><rect x="1887" y="905" width="1" height="1" fill="#b8c9a0"/><rect x="1888" y="905" width="1" height="1" fill="#b8c9a0"/><rect x="1889" y="905" width="1" height="1" fill="#ffffff"/><rect x="1891" y="905" width="1" height="1" fill="#ffffff"/><rect x="1892" y="905" width="1" height="1" fill="#ffffff"/><rect x="1895" y="905" width="1" height="1" fill="#b8c9a0"/><rect x="1896" y="905" width="1" height="1" fill="#b8c9a0"/><rect x="1897" y="905" width="1" height="1" fill="#b8c9a0"/><rect x="1899" y="905" width="1" height="1" fill="#ffffff"/><rect x="1902" y="905" width="1" height="1" fill="#b8c9a0"/><rect x="1903" y="905" width="1" height="1" fill="#b8c9a0"/><rect x="1905" y="905" width="1" height="1" fill="#ffffff"/><rect x="1908" y="905" width="1" height="1" fill="#ffffff"/><rect x="1910" y="905" width="1" height="1" fill="#b8c9a0"/><rect x="1912" y="905" width="1" height="1" fill="#b8c9a0"/><rect x="1914" y="905" width="1" height="1" fill="#b8c9a0"/><rect x="1917" y="905" width="1" height="1" fill="#b8c9a0"/><rect x="1854" y="906" width="1" height="1" fill="#b8c9a0"/><rect x="1855" y="906" width="1" height="1" fill="#ffffff"/><rect x="1857" y="906" width="1" height="1" fill="#b8c9a0"/><rect x="1859" y="906" width="1" height="1" fill="#ffffff"/><rect x="1861" y="906" width="1" height="1" fill="#ffffff"/><rect x="1863" y="906" width="1" height="1" fill="#b8c9a0"/><rect x="1865" y="906" width="1" height="1" fill="#ffffff"/><rect x="1866" y="906" width="1" height="1" fill="#b8c9a0"/><rect x="1867" y="906" width="1" height="1" fill="#ffffff"/><rect x="1868" y="906" width="1" height="1" fill="#b8c9a0"/><rect x="1873" y="906" width="1" height="1" fill="#b8c9a0"/><rect x="1874" y="906" width="1" height="1" fill="#ffffff"/><rect x="1877" y="906" width="1" height="1" fill="#b8c9a0"/><rect x="1878" y="906" width="1" height="1" fill="#ffffff"/><rect x="1879" y="906" width="1" height="1" fill="#b8c9a0"/><rect x="1882" y="906" width="1" height="1" fill="#ffffff"/><rect x="1883" y="906" width="1" height="1" fill="#b8c9a0"/><rect x="1888" y="906" width="1" height="1" fill="#ffffff"/><rect x="1889" y="906" width="1" height="1" fill="#b8c9a0"/><rect x="1890" y="906" width="1" height="1" fill="#b8c9a0"/><rect x="1891" y="906" width="1" height="1" fill="#b8c9a0"/><rect x="1895" y="906" width="1" height="1" fill="#b8c9a0"/><rect x="1901" y="906" width="1" height="1" fill="#ffffff"/><rect x="1902" y="906" width="1" height="1" fill="#b8c9a0"/><rect x="1904" y="906" width="1" height="1" fill="#b8c9a0"/><rect x="1909" y="906" width="1" height="1" fill="#b8c9a0"/><rect x="1912" y="906" width="1" height="1" fill="#ffffff"/><rect x="1913" y="906" width="1" height="1" fill="#ffffff"/><rect x="1914" y="906" width="1" height="1" fill="#b8c9a0"/><rect x="1917" y="906" width="1" height="1" fill="#b8c9a0"/><rect x="1856" y="907" width="1" height="1" fill="#b8c9a0"/><rect x="1859" y="907" width="1" height="1" fill="#ffffff"/><rect x="1860" y="907" width="1" height="1" fill="#b8c9a0"/><rect x="1862" y="907" width="1" height="1" fill="#b8c9a0"/><rect x="1863" y="907" width="1" height="1" fill="#ffffff"/><rect x="1866" y="907" width="1" height="1" fill="#b8c9a0"/><rect x="1868" y="907" width="1" height="1" fill="#b8c9a0"/><rect x="1869" y="907" width="1" height="1" fill="#b8c9a0"/><rect x="1870" y="907" width="1" height="1" fill="#b8c9a0"/><rect x="1871" y="907" width="1" height="1" fill="#ffffff"/><rect x="1874" y="907" width="1" height="1" fill="#ffffff"/><rect x="1875" y="907" width="1" height="1" fill="#b8c9a0"/><rect x="1878" y="907" width="1" height="1" fill="#b8c9a0"/><rect x="1880" y="907" width="1" height="1" fill="#b8c9a0"/><rect x="1881" y="907" width="1" height="1" fill="#ffffff"/><rect x="1882" y="907" width="1" height="1" fill="#ffffff"/><rect x="1885" y="907" width="1" height="1" fill="#ffffff"/><rect x="1887" y="907" width="1" height="1" fill="#b8c9a0"/><rect x="1888" y="907" width="1" height="1" fill="#ffffff"/><rect x="1890" y="907" width="1" height="1" fill="#b8c9a0"/><rect x="1892" y="907" width="1" height="1" fill="#ffffff"/><rect x="1899" y="907" width="1" height="1" fill="#ffffff"/><rect x="1900" y="907" width="1" height="1" fill="#ffffff"/><rect x="1901" y="907" width="1" height="1" fill="#ffffff"/><rect x="1903" y="907" width="1" height="1" fill="#b8c9a0"/><rect x="1905" y="907" width="1" height="1" fill="#b8c9a0"/><rect x="1907" y="907" width="1" height="1" fill="#b8c9a0"/><rect x="1912" y="907" width="1" height="1" fill="#b8c9a0"/><rect x="1916" y="907" width="1" height="1" fill="#b8c9a0"/><rect x="1857" y="908" width="1" height="1" fill="#ffffff"/><rect x="1858" y="908" width="1" height="1" fill="#b8c9a0"/><rect x="1861" y="908" width="1" height="1" fill="#ffffff"/><rect x="1862" y="908" width="1" height="1" fill="#b8c9a0"/><rect x="1867" y="908" width="1" height="1" fill="#ffffff"/><rect x="1868" y="908" width="1" height="1" fill="#b8c9a0"/><rect x="1869" y="908" width="1" height="1" fill="#ffffff"/><rect x="1870" y="908" width="1" height="1" fill="#b8c9a0"/><rect x="1873" y="908" width="1" height="1" fill="#ffffff"/><rect x="1874" y="908" width="1" height="1" fill="#ffffff"/><rect x="1877" y="908" width="1" height="1" fill="#b8c9a0"/><rect x="1879" y="908" width="1" height="1" fill="#ffffff"/><rect x="1881" y="908" width="1" height="1" fill="#b8c9a0"/><rect x="1882" y="908" width="1" height="1" fill="#ffffff"/><rect x="1883" y="908" width="1" height="1" fill="#b8c9a0"/><rect x="1884" y="908" width="1" height="1" fill="#b8c9a0"/><rect x="1886" y="908" width="1" height="1" fill="#ffffff"/><rect x="1889" y="908" width="1" height="1" fill="#ffffff"/><rect x="1890" y="908" width="1" height="1" fill="#b8c9a0"/><rect x="1892" y="908" width="1" height="1" fill="#b8c9a0"/><rect x="1893" y="908" width="1" height="1" fill="#b8c9a0"/><rect x="1895" y="908" width="1" height="1" fill="#ffffff"/><rect x="1896" y="908" width="1" height="1" fill="#b8c9a0"/><rect x="1899" y="908" width="1" height="1" fill="#b8c9a0"/><rect x="1900" y="908" width="1" height="1" fill="#b8c9a0"/><rect x="1903" y="908" width="1" height="1" fill="#b8c9a0"/><rect x="1905" y="908" width="1" height="1" fill="#b8c9a0"/><rect x="1907" y="908" width="1" height="1" fill="#ffffff"/><rect x="1908" y="908" width="1" height="1" fill="#b8c9a0"/><rect x="1911" y="908" width="1" height="1" fill="#b8c9a0"/><rect x="1912" y="908" width="1" height="1" fill="#ffffff"/><rect x="1915" y="908" width="1" height="1" fill="#b8c9a0"/><rect x="1917" y="908" width="1" height="1" fill="#b8c9a0"/><rect x="1855" y="1016" width="1" height="1" fill="#b8c9a0"/><rect x="1857" y="1016" width="1" height="1" fill="#ffffff"/><rect x="1859" y="1016" width="1" height="1" fill="#ffffff"/><rect x="1861" y="1016" width="1" height="1" fill="#b8c9a0"/><rect x="1862" y="1016" width="1" height="1" fill="#b8c9a0"/><rect x="1863" y="1016" width="1" height="1" fill="#ffffff"/><rect x="1865" y="1016" width="1" height="1" fill="#ffffff"/><rect x="1866" y="1016" width="1" height="1" fill="#b8c9a0"/><rect x="1868" y="1016" width="1" height="1" fill="#b8c9a0"/><rect x="1869" y="1016" width="1" height="1" fill="#ffffff"/><rect x="1870" y="1016" width="1" height="1" fill="#ffffff"/><rect x="1871" y="1016" width="1" height="1" fill="#b8c9a0"/><rect x="1875" y="1016" width="1" height="1" fill="#ffffff"/><rect x="1876" y="1016" width="1" height="1" fill="#b8c9a0"/><rect x="1877" y="1016" width="1" height="1" fill="#b8c9a0"/><rect x="1878" y="1016" width="1" height="1" fill="#ffffff"/><rect x="1879" y="1016" width="1" height="1" fill="#ffffff"/><rect x="1880" y="1016" width="1" height="1" fill="#ffffff"/><rect x="1881" y="1016" width="1" height="1" fill="#ffffff"/><rect x="1883" y="1016" width="1" height="1" fill="#b8c9a0"/><rect x="1884" y="1016" width="1" height="1" fill="#ffffff"/><rect x="1886" y="1016" width="1" height="1" fill="#b8c9a0"/><rect x="1889" y="1016" width="1" height="1" fill="#b8c9a0"/><rect x="1891" y="1016" width="1" height="1" fill="#ffffff"/><rect x="1892" y="1016" width="1" height="1" fill="#ffffff"/><rect x="1893" y="1016" width="1" height="1" fill="#ffffff"/><rect x="1896" y="1016" width="1" height="1" fill="#b8c9a0"/><rect x="1899" y="1016" width="1" height="1" fill="#ffffff"/><rect x="1900" y="1016" width="1" height="1" fill="#b8c9a0"/><rect x="1901" y="1016" width="1" height="1" fill="#b8c9a0"/><rect x="1907" y="1016" width="1" height="1" fill="#ffffff"/><rect x="1912" y="1016" width="1" height="1" fill="#ffffff"/><rect x="1914" y="1016" width="1" height="1" fill="#b8c9a0"/><rect x="1917" y="1016" width="1" height="1" fill="#ffffff"/><rect x="1856" y="1017" width="1" height="1" fill="#ffffff"/><rect x="1857" y="1017" width="1" height="1" fill="#ffffff"/><rect x="1859" y="1017" width="1" height="1" fill="#ffffff"/><rect x="1860" y="1017" width="1" height="1" fill="#ffffff"/><rect x="1862" y="1017" width="1" height="1" fill="#b8c9a0"/><rect x="1864" y="1017" width="1" height="1" fill="#b8c9a0"/><rect x="1866" y="1017" width="1" height="1" fill="#ffffff"/><rect x="1868" y="1017" width="1" height="1" fill="#b8c9a0"/><rect x="1870" y="1017" width="1" height="1" fill="#ffffff"/><rect x="1872" y="1017" width="1" height="1" fill="#ffffff"/><rect x="1874" y="1017" width="1" height="1" fill="#ffffff"/><rect x="1875" y="1017" width="1" height="1" fill="#b8c9a0"/><rect x="1877" y="1017" width="1" height="1" fill="#ffffff"/><rect x="1878" y="1017" width="1" height="1" fill="#ffffff"/><rect x="1884" y="1017" width="1" height="1" fill="#b8c9a0"/><rect x="1887" y="1017" width="1" height="1" fill="#ffffff"/><rect x="1888" y="1017" width="1" height="1" fill="#b8c9a0"/><rect x="1889" y="1017" width="1" height="1" fill="#ffffff"/><rect x="1890" y="1017" width="1" height="1" fill="#ffffff"/><rect x="1894" y="1017" width="1" height="1" fill="#ffffff"/><rect x="1896" y="1017" width="1" height="1" fill="#b8c9a0"/><rect x="1897" y="1017" width="1" height="1" fill="#b8c9a0"/><rect x="1899" y="1017" width="1" height="1" fill="#b8c9a0"/><rect x="1902" y="1017" width="1" height="1" fill="#b8c9a0"/><rect x="1905" y="1017" width="1" height="1" fill="#b8c9a0"/><rect x="1906" y="1017" width="1" height="1" fill="#ffffff"/><rect x="1907" y="1017" width="1" height="1" fill="#ffffff"/><rect x="1908" y="1017" width="1" height="1" fill="#b8c9a0"/><rect x="1909" y="1017" width="1" height="1" fill="#b8c9a0"/><rect x="1913" y="1017" width="1" height="1" fill="#ffffff"/><rect x="1915" y="1017" width="1" height="1" fill="#ffffff"/><rect x="1856" y="1018" width="1" height="1" fill="#b8c9a0"/><rect x="1860" y="1018" width="1" height="1" fill="#b8c9a0"/><rect x="1861" y="1018" width="1" height="1" fill="#ffffff"/><rect x="1862" y="1018" width="1" height="1" fill="#b8c9a0"/><rect x="1863" y="1018" width="1" height="1" fill="#ffffff"/><rect x="1864" y="1018" width="1" height="1" fill="#ffffff"/><rect x="1865" y="1018" width="1" height="1" fill="#b8c9a0"/><rect x="1866" y="1018" width="1" height="1" fill="#ffffff"/><rect x="1867" y="1018" width="1" height="1" fill="#b8c9a0"/><rect x="1872" y="1018" width="1" height="1" fill="#b8c9a0"/><rect x="1877" y="1018" width="1" height="1" fill="#ffffff"/><rect x="1879" y="1018" width="1" height="1" fill="#ffffff"/><rect x="1883" y="1018" width="1" height="1" fill="#b8c9a0"/><rect x="1886" y="1018" width="1" height="1" fill="#ffffff"/><rect x="1888" y="1018" width="1" height="1" fill="#b8c9a0"/><rect x="1890" y="1018" width="1" height="1" fill="#b8c9a0"/><rect x="1891" y="1018" width="1" height="1" fill="#ffffff"/><rect x="1893" y="1018" width="1" height="1" fill="#b8c9a0"/><rect x="1894" y="1018" width="1" height="1" fill="#b8c9a0"/><rect x="1900" y="1018" width="1" height="1" fill="#b8c9a0"/><rect x="1903" y="1018" width="1" height="1" fill="#b8c9a0"/><rect x="1904" y="1018" width="1" height="1" fill="#b8c9a0"/><rect x="1906" y="1018" width="1" height="1" fill="#ffffff"/><rect x="1910" y="1018" width="1" height="1" fill="#b8c9a0"/><rect x="1912" y="1018" width="1" height="1" fill="#b8c9a0"/><rect x="1914" y="1018" width="1" height="1" fill="#b8c9a0"/><rect x="1854" y="1027" width="1" height="1" fill="#ffffff"/><rect x="1855" y="1027" width="1" height="1" fill="#b8c9a0"/><rect x="1856" y="1027" width="1" height="1" fill="#dddddd"/><rect x="1857" y="1027" width="1" height="1" fill="#ffffff"/><rect x="1862" y="1027" width="1" height="1" fill="#dddddd"/><rect x="1863" y="1027" width="1" height="1" fill="#ffffff"/><rect x="1864" y="1027" width="1" height="1" fill="#b8c9a0"/><rect x="1865" y="1027" width="1" height="1" fill="#b8c9a0"/><rect x="1867" y="1027" width="1" height="1" fill="#ffffff"/><rect x="1869" y="1027" width="1" height="1" fill="#dddddd"/><rect x="1870" y="1027" width="1" height="1" fill="#ffffff"/><rect x="1872" y="1027" width="1" height="1" fill="#ffffff"/><rect x="1873" y="1027" width="1" height="1" fill="#b8c9a0"/><rect x="1875" y="1027" width="1" height="1" fill="#ffffff"/><rect x="1876" y="1027" width="1" height="1" fill="#ffffff"/><rect x="1878" y="1027" width="1" height="1" fill="#ffffff"/><rect x="1882" y="1027" width="1" height="1" fill="#dddddd"/><rect x="1885" y="1027" width="1" height="1" fill="#dddddd"/><rect x="1888" y="1027" width="1" height="1" fill="#b8c9a0"/><rect x="1893" y="1027" width="1" height="1" fill="#dddddd"/><rect x="1894" y="1027" width="1" height="1" fill="#b8c9a0"/><rect x="1896" y="1027" width="1" height="1" fill="#ffffff"/><rect x="1898" y="1027" width="1" height="1" fill="#ffffff"/><rect x="1902" y="1027" width="1" height="1" fill="#ffffff"/><rect x="1903" y="1027" width="1" height="1" fill="#b8c9a0"/><rect x="1905" y="1027" width="1" height="1" fill="#b8c9a0"/><rect x="1910" y="1027" width="1" height="1" fill="#dddddd"/><rect x="1912" y="1027" width="1" height="1" fill="#b8c9a0"/><rect x="1914" y="1027" width="1" height="1" fill="#dddddd"/><rect x="1916" y="1027" width="1" height="1" fill="#ffffff"/><rect x="1917" y="1027" width="1" height="1" fill="#ffffff"/><rect x="1854" y="1028" width="1" height="1" fill="#ffffff"/><rect x="1856" y="1028" width="1" height="1" fill="#ffffff"/><rect x="1858" y="1028" width="1" height="1" fill="#ffffff"/><rect x="1863" y="1028" width="1" height="1" fill="#dddddd"/><rect x="1870" y="1028" width="1" height="1" fill="#dddddd"/><rect x="1871" y="1028" width="1" height="1" fill="#dddddd"/><rect x="1873" y="1028" width="1" height="1" fill="#b8c9a0"/><rect x="1874" y="1028" width="1" height="1" fill="#b8c9a0"/><rect x="1880" y="1028" width="1" height="1" fill="#b8c9a0"/><rect x="1882" y="1028" width="1" height="1" fill="#dddddd"/><rect x="1885" y="1028" width="1" height="1" fill="#ffffff"/><rect x="1886" y="1028" width="1" height="1" fill="#b8c9a0"/><rect x="1887" y="1028" width="1" height="1" fill="#dddddd"/><rect x="1890" y="1028" width="1" height="1" fill="#dddddd"/><rect x="1891" y="1028" width="1" height="1" fill="#ffffff"/><rect x="1892" y="1028" width="1" height="1" fill="#ffffff"/><rect x="1893" y="1028" width="1" height="1" fill="#dddddd"/><rect x="1894" y="1028" width="1" height="1" fill="#b8c9a0"/><rect x="1896" y="1028" width="1" height="1" fill="#b8c9a0"/><rect x="1899" y="1028" width="1" height="1" fill="#dddddd"/><rect x="1901" y="1028" width="1" height="1" fill="#dddddd"/><rect x="1903" y="1028" width="1" height="1" fill="#ffffff"/><rect x="1907" y="1028" width="1" height="1" fill="#ffffff"/><rect x="1908" y="1028" width="1" height="1" fill="#b8c9a0"/><rect x="1909" y="1028" width="1" height="1" fill="#dddddd"/><rect x="1910" y="1028" width="1" height="1" fill="#ffffff"/><rect x="1914" y="1028" width="1" height="1" fill="#dddddd"/><rect x="1917" y="1028" width="1" height="1" fill="#ffffff"/><rect x="1856" y="1029" width="1" height="1" fill="#b8c9a0"/><rect x="1858" y="1029" width="1" height="1" fill="#b8c9a0"/><rect x="1860" y="1029" width="1" height="1" fill="#ffffff"/><rect x="1863" y="1029" width="1" height="1" fill="#ffffff"/><rect x="1865" y="1029" width="1" height="1" fill="#dddddd"/><rect x="1866" y="1029" width="1" height="1" fill="#ffffff"/><rect x="1867" y="1029" width="1" height="1" fill="#ffffff"/><rect x="1869" y="1029" width="1" height="1" fill="#dddddd"/><rect x="1870" y="1029" width="1" height="1" fill="#dddddd"/><rect x="1871" y="1029" width="1" height="1" fill="#dddddd"/><rect x="1873" y="1029" width="1" height="1" fill="#b8c9a0"/><rect x="1874" y="1029" width="1" height="1" fill="#dddddd"/><rect x="1880" y="1029" width="1" height="1" fill="#dddddd"/><rect x="1886" y="1029" width="1" height="1" fill="#dddddd"/><rect x="1887" y="1029" width="1" height="1" fill="#dddddd"/><rect x="1889" y="1029" width="1" height="1" fill="#ffffff"/><rect x="1893" y="1029" width="1" height="1" fill="#ffffff"/><rect x="1894" y="1029" width="1" height="1" fill="#b8c9a0"/><rect x="1896" y="1029" width="1" height="1" fill="#b8c9a0"/><rect x="1899" y="1029" width="1" height="1" fill="#dddddd"/><rect x="1901" y="1029" width="1" height="1" fill="#dddddd"/><rect x="1902" y="1029" width="1" height="1" fill="#ffffff"/><rect x="1906" y="1029" width="1" height="1" fill="#dddddd"/><rect x="1907" y="1029" width="1" height="1" fill="#dddddd"/><rect x="1908" y="1029" width="1" height="1" fill="#b8c9a0"/><rect x="1909" y="1029" width="1" height="1" fill="#b8c9a0"/><rect x="1910" y="1029" width="1" height="1" fill="#dddddd"/><rect x="1911" y="1029" width="1" height="1" fill="#dddddd"/><rect x="1913" y="1029" width="1" height="1" fill="#ffffff"/><rect x="1914" y="1029" width="1" height="1" fill="#b8c9a0"/><rect x="1915" y="1029" width="1" height="1" fill="#ffffff"/><rect x="1916" y="1029" width="1" height="1" fill="#ffffff"/><rect x="1917" y="1029" width="1" height="1" fill="#b8c9a0"/><rect x="1854" y="1030" width="1" height="1" fill="#dddddd"/><rect x="1857" y="1030" width="1" height="1" fill="#b8c9a0"/><rect x="1858" y="1030" width="1" height="1" fill="#ffffff"/><rect x="1860" y="1030" width="1" height="1" fill="#dddddd"/><rect x="1861" y="1030" width="1" height="1" fill="#b8c9a0"/><rect x="1862" y="1030" width="1" height="1" fill="#b8c9a0"/><rect x="1865" y="1030" width="1" height="1" fill="#ffffff"/><rect x="1867" y="1030" width="1" height="1" fill="#ffffff"/><rect x="1872" y="1030" width="1" height="1" fill="#ffffff"/><rect x="1874" y="1030" width="1" height="1" fill="#dddddd"/><rect x="1876" y="1030" width="1" height="1" fill="#b8c9a0"/><rect x="1877" y="1030" width="1" height="1" fill="#b8c9a0"/><rect x="1879" y="1030" width="1" height="1" fill="#b8c9a0"/><rect x="1881" y="1030" width="1" height="1" fill="#dddddd"/><rect x="1883" y="1030" width="1" height="1" fill="#b8c9a0"/><rect x="1885" y="1030" width="1" height="1" fill="#dddddd"/><rect x="1891" y="1030" width="1" height="1" fill="#ffffff"/><rect x="1892" y="1030" width="1" height="1" fill="#dddddd"/><rect x="1894" y="1030" width="1" height="1" fill="#ffffff"/><rect x="1895" y="1030" width="1" height="1" fill="#ffffff"/><rect x="1896" y="1030" width="1" height="1" fill="#dddddd"/><rect x="1897" y="1030" width="1" height="1" fill="#b8c9a0"/><rect x="1899" y="1030" width="1" height="1" fill="#b8c9a0"/><rect x="1901" y="1030" width="1" height="1" fill="#dddddd"/><rect x="1902" y="1030" width="1" height="1" fill="#ffffff"/><rect x="1903" y="1030" width="1" height="1" fill="#dddddd"/><rect x="1904" y="1030" width="1" height="1" fill="#dddddd"/><rect x="1909" y="1030" width="1" height="1" fill="#b8c9a0"/><rect x="1912" y="1030" width="1" height="1" fill="#dddddd"/><rect x="1914" y="1030" width="1" height="1" fill="#ffffff"/><rect x="1915" y="1030" width="1" height="1" fill="#ffffff"/><rect x="1917" y="1030" width="1" height="1" fill="#b8c9a0"/><rect x="1859" y="1031" width="1" height="1" fill="#b8c9a0"/><rect x="1860" y="1031" width="1" height="1" fill="#dddddd"/><rect x="1862" y="1031" width="1" height="1" fill="#dddddd"/><rect x="1864" y="1031" width="1" height="1" fill="#ffffff"/><rect x="1867" y="1031" width="1" height="1" fill="#b8c9a0"/><rect x="1872" y="1031" width="1" height="1" fill="#dddddd"/><rect x="1873" y="1031" width="1" height="1" fill="#ffffff"/><rect x="1875" y="1031" width="1" height="1" fill="#ffffff"/><rect x="1877" y="1031" width="1" height="1" fill="#ffffff"/><rect x="1881" y="1031" width="1" height="1" fill="#b8c9a0"/><rect x="1882" y="1031" width="1" height="1" fill="#dddddd"/><rect x="1883" y="1031" width="1" height="1" fill="#dddddd"/><rect x="1887" y="1031" width="1" height="1" fill="#b8c9a0"/><rect x="1890" y="1031" width="1" height="1" fill="#dddddd"/><rect x="1891" y="1031" width="1" height="1" fill="#dddddd"/><rect x="1895" y="1031" width="1" height="1" fill="#dddddd"/><rect x="1896" y="1031" width="1" height="1" fill="#ffffff"/><rect x="1899" y="1031" width="1" height="1" fill="#ffffff"/><rect x="1901" y="1031" width="1" height="1" fill="#ffffff"/><rect x="1902" y="1031" width="1" height="1" fill="#ffffff"/><rect x="1905" y="1031" width="1" height="1" fill="#b8c9a0"/><rect x="1908" y="1031" width="1" height="1" fill="#ffffff"/><rect x="1911" y="1031" width="1" height="1" fill="#ffffff"/><rect x="1913" y="1031" width="1" height="1" fill="#dddddd"/><rect x="1914" y="1031" width="1" height="1" fill="#ffffff"/><rect x="1916" y="1031" width="1" height="1" fill="#b8c9a0"/><rect x="1855" y="1032" width="1" height="1" fill="#ffffff"/><rect x="1856" y="1032" width="1" height="1" fill="#b8c9a0"/><rect x="1858" y="1032" width="1" height="1" fill="#dddddd"/><rect x="1859" y="1032" width="1" height="1" fill="#b8c9a0"/><rect x="1861" y="1032" width="1" height="1" fill="#b8c9a0"/><rect x="1865" y="1032" width="1" height="1" fill="#dddddd"/><rect x="1868" y="1032" width="1" height="1" fill="#ffffff"/><rect x="1869" y="1032" width="1" height="1" fill="#b8c9a0"/><rect x="1870" y="1032" width="1" height="1" fill="#b8c9a0"/><rect x="1871" y="1032" width="1" height="1" fill="#ffffff"/><rect x="1872" y="1032" width="1" height="1" fill="#ffffff"/><rect x="1874" y="1032" width="1" height="1" fill="#ffffff"/><rect x="1875" y="1032" width="1" height="1" fill="#b8c9a0"/><rect x="1877" y="1032" width="1" height="1" fill="#b8c9a0"/><rect x="1879" y="1032" width="1" height="1" fill="#dddddd"/><rect x="1883" y="1032" width="1" height="1" fill="#dddddd"/><rect x="1886" y="1032" width="1" height="1" fill="#ffffff"/><rect x="1888" y="1032" width="1" height="1" fill="#ffffff"/><rect x="1890" y="1032" width="1" height="1" fill="#dddddd"/><rect x="1892" y="1032" width="1" height="1" fill="#dddddd"/><rect x="1893" y="1032" width="1" height="1" fill="#ffffff"/><rect x="1896" y="1032" width="1" height="1" fill="#ffffff"/><rect x="1898" y="1032" width="1" height="1" fill="#dddddd"/><rect x="1899" y="1032" width="1" height="1" fill="#dddddd"/><rect x="1901" y="1032" width="1" height="1" fill="#b8c9a0"/><rect x="1902" y="1032" width="1" height="1" fill="#ffffff"/><rect x="1903" y="1032" width="1" height="1" fill="#dddddd"/><rect x="1906" y="1032" width="1" height="1" fill="#b8c9a0"/><rect x="1907" y="1032" width="1" height="1" fill="#ffffff"/><rect x="1908" y="1032" width="1" height="1" fill="#b8c9a0"/><rect x="1909" y="1032" width="1" height="1" fill="#ffffff"/><rect x="1910" y="1032" width="1" height="1" fill="#ffffff"/><rect x="1913" y="1032" width="1" height="1" fill="#ffffff"/><rect x="1914" y="1032" width="1" height="1" fill="#dddddd"/><rect x="1915" y="1032" width="1" height="1" fill="#dddddd"/><rect x="1916" y="1032" width="1" height="1" fill="#b8c9a0"/><rect x="1917" y="1032" width="1" height="1" fill="#ffffff"/><rect x="1864" y="927" width="17" height="2" fill="#b8c9a0"/><rect x="1880" y="893" width="26" height="2" fill="#b8c9a0"/><rect x="1880" y="1004" width="26" height="2" fill="#9a9c9e"/><rect x="1854" y="1041" width="64" height="20" fill="#b8c9a0"/><rect x="1856" y="1041" width="1" height="1" fill="#1c1d1d"/><rect x="1866" y="1041" width="1" height="1" fill="#1c1d1d"/><rect x="1867" y="1041" width="1" height="1" fill="#1c1d1d"/><rect x="1868" y="1041" width="1" height="1" fill="#1c1d1d"/><rect x="1871" y="1041" width="1" height="1" fill="#1c1d1d"/><rect x="1874" y="1041" width="1" height="1" fill="#1c1d1d"/><rect x="1881" y="1041" width="1" height="1" fill="#1c1d1d"/><rect x="1885" y="1041" width="1" height="1" fill="#1c1d1d"/><rect x="1887" y="1041" width="1" height="1" fill="#1c1d1d"/><rect x="1888" y="1041" width="1" height="1" fill="#1c1d1d"/><rect x="1895" y="1041" width="1" height="1" fill="#1c1d1d"/><rect x="1896" y="1041" width="1" height="1" fill="#1c1d1d"/><rect x="1905" y="1041" width="1" height="1" fill="#1c1d1d"/><rect x="1908" y="1041" width="1" height="1" fill="#1c1d1d"/><rect x="1859" y="1042" width="1" height="1" fill="#1c1d1d"/><rect x="1866" y="1042" width="1" height="1" fill="#1c1d1d"/><rect x="1871" y="1042" width="1" height="1" fill="#1c1d1d"/><rect x="1872" y="1042" width="1" height="1" fill="#1c1d1d"/><rect x="1873" y="1042" width="1" height="1" fill="#1c1d1d"/><rect x="1876" y="1042" width="1" height="1" fill="#1c1d1d"/><rect x="1879" y="1042" width="1" height="1" fill="#1c1d1d"/><rect x="1880" y="1042" width="1" height="1" fill="#1c1d1d"/><rect x="1882" y="1042" width="1" height="1" fill="#1c1d1d"/><rect x="1893" y="1042" width="1" height="1" fill="#1c1d1d"/><rect x="1909" y="1042" width="1" height="1" fill="#1c1d1d"/><rect x="1911" y="1042" width="1" height="1" fill="#1c1d1d"/><rect x="1912" y="1042" width="1" height="1" fill="#1c1d1d"/><rect x="1917" y="1042" width="1" height="1" fill="#1c1d1d"/><rect x="1854" y="1043" width="1" height="1" fill="#1c1d1d"/><rect x="1855" y="1043" width="1" height="1" fill="#1c1d1d"/><rect x="1856" y="1043" width="1" height="1" fill="#1c1d1d"/><rect x="1858" y="1043" width="1" height="1" fill="#1c1d1d"/><rect x="1867" y="1043" width="1" height="1" fill="#1c1d1d"/><rect x="1869" y="1043" width="1" height="1" fill="#1c1d1d"/><rect x="1883" y="1043" width="1" height="1" fill="#1c1d1d"/><rect x="1884" y="1043" width="1" height="1" fill="#1c1d1d"/><rect x="1886" y="1043" width="1" height="1" fill="#1c1d1d"/><rect x="1889" y="1043" width="1" height="1" fill="#1c1d1d"/><rect x="1890" y="1043" width="1" height="1" fill="#1c1d1d"/><rect x="1891" y="1043" width="1" height="1" fill="#1c1d1d"/><rect x="1897" y="1043" width="1" height="1" fill="#1c1d1d"/><rect x="1899" y="1043" width="1" height="1" fill="#1c1d1d"/><rect x="1900" y="1043" width="1" height="1" fill="#1c1d1d"/><rect x="1901" y="1043" width="1" height="1" fill="#1c1d1d"/><rect x="1903" y="1043" width="1" height="1" fill="#1c1d1d"/><rect x="1907" y="1043" width="1" height="1" fill="#1c1d1d"/><rect x="1910" y="1043" width="1" height="1" fill="#1c1d1d"/><rect x="1917" y="1043" width="1" height="1" fill="#1c1d1d"/><rect x="1856" y="1044" width="1" height="1" fill="#1c1d1d"/><rect x="1859" y="1044" width="1" height="1" fill="#1c1d1d"/><rect x="1860" y="1044" width="1" height="1" fill="#1c1d1d"/><rect x="1866" y="1044" width="1" height="1" fill="#1c1d1d"/><rect x="1871" y="1044" width="1" height="1" fill="#1c1d1d"/><rect x="1872" y="1044" width="1" height="1" fill="#1c1d1d"/><rect x="1875" y="1044" width="1" height="1" fill="#1c1d1d"/><rect x="1884" y="1044" width="1" height="1" fill="#1c1d1d"/><rect x="1885" y="1044" width="1" height="1" fill="#1c1d1d"/><rect x="1886" y="1044" width="1" height="1" fill="#1c1d1d"/><rect x="1887" y="1044" width="1" height="1" fill="#1c1d1d"/><rect x="1891" y="1044" width="1" height="1" fill="#1c1d1d"/><rect x="1898" y="1044" width="1" height="1" fill="#1c1d1d"/><rect x="1900" y="1044" width="1" height="1" fill="#1c1d1d"/><rect x="1901" y="1044" width="1" height="1" fill="#1c1d1d"/><rect x="1902" y="1044" width="1" height="1" fill="#1c1d1d"/><rect x="1904" y="1044" width="1" height="1" fill="#1c1d1d"/><rect x="1911" y="1044" width="1" height="1" fill="#1c1d1d"/><rect x="1915" y="1044" width="1" height="1" fill="#1c1d1d"/><rect x="1917" y="1044" width="1" height="1" fill="#1c1d1d"/><rect x="1855" y="1045" width="1" height="1" fill="#1c1d1d"/><rect x="1858" y="1045" width="1" height="1" fill="#1c1d1d"/><rect x="1860" y="1045" width="1" height="1" fill="#1c1d1d"/><rect x="1862" y="1045" width="1" height="1" fill="#1c1d1d"/><rect x="1863" y="1045" width="1" height="1" fill="#1c1d1d"/><rect x="1865" y="1045" width="1" height="1" fill="#1c1d1d"/><rect x="1885" y="1045" width="1" height="1" fill="#1c1d1d"/><rect x="1889" y="1045" width="1" height="1" fill="#1c1d1d"/><rect x="1896" y="1045" width="1" height="1" fill="#1c1d1d"/><rect x="1900" y="1045" width="1" height="1" fill="#1c1d1d"/><rect x="1904" y="1045" width="1" height="1" fill="#1c1d1d"/><rect x="1910" y="1045" width="1" height="1" fill="#1c1d1d"/><rect x="1911" y="1045" width="1" height="1" fill="#1c1d1d"/><rect x="1914" y="1045" width="1" height="1" fill="#1c1d1d"/><rect x="1915" y="1045" width="1" height="1" fill="#1c1d1d"/><rect x="1916" y="1045" width="1" height="1" fill="#1c1d1d"/><rect x="1854" y="1046" width="1" height="1" fill="#1c1d1d"/><rect x="1859" y="1046" width="1" height="1" fill="#1c1d1d"/><rect x="1867" y="1046" width="1" height="1" fill="#1c1d1d"/><rect x="1869" y="1046" width="1" height="1" fill="#1c1d1d"/><rect x="1872" y="1046" width="1" height="1" fill="#1c1d1d"/><rect x="1873" y="1046" width="1" height="1" fill="#1c1d1d"/><rect x="1878" y="1046" width="1" height="1" fill="#1c1d1d"/><rect x="1888" y="1046" width="1" height="1" fill="#1c1d1d"/><rect x="1891" y="1046" width="1" height="1" fill="#1c1d1d"/><rect x="1897" y="1046" width="1" height="1" fill="#1c1d1d"/><rect x="1899" y="1046" width="1" height="1" fill="#1c1d1d"/><rect x="1903" y="1046" width="1" height="1" fill="#1c1d1d"/><rect x="1914" y="1046" width="1" height="1" fill="#1c1d1d"/><rect x="1917" y="1046" width="1" height="1" fill="#1c1d1d"/><rect x="1858" y="1047" width="1" height="1" fill="#1c1d1d"/><rect x="1862" y="1047" width="1" height="1" fill="#1c1d1d"/><rect x="1863" y="1047" width="1" height="1" fill="#1c1d1d"/><rect x="1866" y="1047" width="1" height="1" fill="#1c1d1d"/><rect x="1877" y="1047" width="1" height="1" fill="#1c1d1d"/><rect x="1882" y="1047" width="1" height="1" fill="#1c1d1d"/><rect x="1884" y="1047" width="1" height="1" fill="#1c1d1d"/><rect x="1885" y="1047" width="1" height="1" fill="#1c1d1d"/><rect x="1886" y="1047" width="1" height="1" fill="#1c1d1d"/><rect x="1889" y="1047" width="1" height="1" fill="#1c1d1d"/><rect x="1895" y="1047" width="1" height="1" fill="#1c1d1d"/><rect x="1902" y="1047" width="1" height="1" fill="#1c1d1d"/><rect x="1903" y="1047" width="1" height="1" fill="#1c1d1d"/><rect x="1912" y="1047" width="1" height="1" fill="#1c1d1d"/><rect x="1915" y="1047" width="1" height="1" fill="#1c1d1d"/><rect x="1917" y="1047" width="1" height="1" fill="#1c1d1d"/><rect x="1857" y="1048" width="1" height="1" fill="#1c1d1d"/><rect x="1858" y="1048" width="1" height="1" fill="#1c1d1d"/><rect x="1860" y="1048" width="1" height="1" fill="#1c1d1d"/><rect x="1862" y="1048" width="1" height="1" fill="#1c1d1d"/><rect x="1865" y="1048" width="1" height="1" fill="#1c1d1d"/><rect x="1868" y="1048" width="1" height="1" fill="#1c1d1d"/><rect x="1870" y="1048" width="1" height="1" fill="#1c1d1d"/><rect x="1880" y="1048" width="1" height="1" fill="#1c1d1d"/><rect x="1882" y="1048" width="1" height="1" fill="#1c1d1d"/><rect x="1885" y="1048" width="1" height="1" fill="#1c1d1d"/><rect x="1891" y="1048" width="1" height="1" fill="#1c1d1d"/><rect x="1893" y="1048" width="1" height="1" fill="#1c1d1d"/><rect x="1900" y="1048" width="1" height="1" fill="#1c1d1d"/><rect x="1902" y="1048" width="1" height="1" fill="#1c1d1d"/><rect x="1904" y="1048" width="1" height="1" fill="#1c1d1d"/><rect x="1905" y="1048" width="1" height="1" fill="#1c1d1d"/><rect x="1856" y="1049" width="1" height="1" fill="#1c1d1d"/><rect x="1859" y="1049" width="1" height="1" fill="#1c1d1d"/><rect x="1864" y="1049" width="1" height="1" fill="#1c1d1d"/><rect x="1866" y="1049" width="1" height="1" fill="#1c1d1d"/><rect x="1872" y="1049" width="1" height="1" fill="#1c1d1d"/><rect x="1876" y="1049" width="1" height="1" fill="#1c1d1d"/><rect x="1885" y="1049" width="1" height="1" fill="#1c1d1d"/><rect x="1886" y="1049" width="1" height="1" fill="#1c1d1d"/><rect x="1889" y="1049" width="1" height="1" fill="#1c1d1d"/><rect x="1891" y="1049" width="1" height="1" fill="#1c1d1d"/><rect x="1894" y="1049" width="1" height="1" fill="#1c1d1d"/><rect x="1895" y="1049" width="1" height="1" fill="#1c1d1d"/><rect x="1902" y="1049" width="1" height="1" fill="#1c1d1d"/><rect x="1908" y="1049" width="1" height="1" fill="#1c1d1d"/><rect x="1909" y="1049" width="1" height="1" fill="#1c1d1d"/><rect x="1912" y="1049" width="1" height="1" fill="#1c1d1d"/><rect x="1917" y="1049" width="1" height="1" fill="#1c1d1d"/><rect x="1854" y="1050" width="1" height="1" fill="#1c1d1d"/><rect x="1856" y="1050" width="1" height="1" fill="#1c1d1d"/><rect x="1857" y="1050" width="1" height="1" fill="#1c1d1d"/><rect x="1864" y="1050" width="1" height="1" fill="#1c1d1d"/><rect x="1865" y="1050" width="1" height="1" fill="#1c1d1d"/><rect x="1867" y="1050" width="1" height="1" fill="#1c1d1d"/><rect x="1868" y="1050" width="1" height="1" fill="#1c1d1d"/><rect x="1873" y="1050" width="1" height="1" fill="#1c1d1d"/><rect x="1874" y="1050" width="1" height="1" fill="#1c1d1d"/><rect x="1877" y="1050" width="1" height="1" fill="#1c1d1d"/><rect x="1885" y="1050" width="1" height="1" fill="#1c1d1d"/><rect x="1887" y="1050" width="1" height="1" fill="#1c1d1d"/><rect x="1892" y="1050" width="1" height="1" fill="#1c1d1d"/><rect x="1896" y="1050" width="1" height="1" fill="#1c1d1d"/><rect x="1902" y="1050" width="1" height="1" fill="#1c1d1d"/><rect x="1905" y="1050" width="1" height="1" fill="#1c1d1d"/><rect x="1908" y="1050" width="1" height="1" fill="#1c1d1d"/><rect x="1909" y="1050" width="1" height="1" fill="#1c1d1d"/><rect x="1913" y="1050" width="1" height="1" fill="#1c1d1d"/><rect x="1855" y="1051" width="1" height="1" fill="#1c1d1d"/><rect x="1865" y="1051" width="1" height="1" fill="#1c1d1d"/><rect x="1866" y="1051" width="1" height="1" fill="#1c1d1d"/><rect x="1867" y="1051" width="1" height="1" fill="#1c1d1d"/><rect x="1872" y="1051" width="1" height="1" fill="#1c1d1d"/><rect x="1873" y="1051" width="1" height="1" fill="#1c1d1d"/><rect x="1877" y="1051" width="1" height="1" fill="#1c1d1d"/><rect x="1884" y="1051" width="1" height="1" fill="#1c1d1d"/><rect x="1892" y="1051" width="1" height="1" fill="#1c1d1d"/><rect x="1908" y="1051" width="1" height="1" fill="#1c1d1d"/><rect x="1912" y="1051" width="1" height="1" fill="#1c1d1d"/><rect x="1914" y="1051" width="1" height="1" fill="#1c1d1d"/><rect x="1861" y="1052" width="1" height="1" fill="#1c1d1d"/><rect x="1862" y="1052" width="1" height="1" fill="#1c1d1d"/><rect x="1865" y="1052" width="1" height="1" fill="#1c1d1d"/><rect x="1878" y="1052" width="1" height="1" fill="#1c1d1d"/><rect x="1880" y="1052" width="1" height="1" fill="#1c1d1d"/><rect x="1881" y="1052" width="1" height="1" fill="#1c1d1d"/><rect x="1883" y="1052" width="1" height="1" fill="#1c1d1d"/><rect x="1885" y="1052" width="1" height="1" fill="#1c1d1d"/><rect x="1887" y="1052" width="1" height="1" fill="#1c1d1d"/><rect x="1891" y="1052" width="1" height="1" fill="#1c1d1d"/><rect x="1892" y="1052" width="1" height="1" fill="#1c1d1d"/><rect x="1894" y="1052" width="1" height="1" fill="#1c1d1d"/><rect x="1898" y="1052" width="1" height="1" fill="#1c1d1d"/><rect x="1901" y="1052" width="1" height="1" fill="#1c1d1d"/><rect x="1902" y="1052" width="1" height="1" fill="#1c1d1d"/><rect x="1903" y="1052" width="1" height="1" fill="#1c1d1d"/><rect x="1905" y="1052" width="1" height="1" fill="#1c1d1d"/><rect x="1908" y="1052" width="1" height="1" fill="#1c1d1d"/><rect x="1910" y="1052" width="1" height="1" fill="#1c1d1d"/><rect x="1915" y="1052" width="1" height="1" fill="#1c1d1d"/><rect x="1854" y="1053" width="1" height="1" fill="#1c1d1d"/><rect x="1862" y="1053" width="1" height="1" fill="#1c1d1d"/><rect x="1864" y="1053" width="1" height="1" fill="#1c1d1d"/><rect x="1867" y="1053" width="1" height="1" fill="#1c1d1d"/><rect x="1878" y="1053" width="1" height="1" fill="#1c1d1d"/><rect x="1880" y="1053" width="1" height="1" fill="#1c1d1d"/><rect x="1885" y="1053" width="1" height="1" fill="#1c1d1d"/><rect x="1895" y="1053" width="1" height="1" fill="#1c1d1d"/><rect x="1900" y="1053" width="1" height="1" fill="#1c1d1d"/><rect x="1906" y="1053" width="1" height="1" fill="#1c1d1d"/><rect x="1912" y="1053" width="1" height="1" fill="#1c1d1d"/><rect x="1916" y="1053" width="1" height="1" fill="#1c1d1d"/><rect x="1862" y="1054" width="1" height="1" fill="#1c1d1d"/><rect x="1864" y="1054" width="1" height="1" fill="#1c1d1d"/><rect x="1869" y="1054" width="1" height="1" fill="#1c1d1d"/><rect x="1870" y="1054" width="1" height="1" fill="#1c1d1d"/><rect x="1872" y="1054" width="1" height="1" fill="#1c1d1d"/><rect x="1878" y="1054" width="1" height="1" fill="#1c1d1d"/><rect x="1882" y="1054" width="1" height="1" fill="#1c1d1d"/><rect x="1884" y="1054" width="1" height="1" fill="#1c1d1d"/><rect x="1885" y="1054" width="1" height="1" fill="#1c1d1d"/><rect x="1890" y="1054" width="1" height="1" fill="#1c1d1d"/><rect x="1891" y="1054" width="1" height="1" fill="#1c1d1d"/><rect x="1895" y="1054" width="1" height="1" fill="#1c1d1d"/><rect x="1904" y="1054" width="1" height="1" fill="#1c1d1d"/><rect x="1905" y="1054" width="1" height="1" fill="#1c1d1d"/><rect x="1907" y="1054" width="1" height="1" fill="#1c1d1d"/><rect x="1909" y="1054" width="1" height="1" fill="#1c1d1d"/><rect x="1914" y="1054" width="1" height="1" fill="#1c1d1d"/><rect x="1916" y="1054" width="1" height="1" fill="#1c1d1d"/><rect x="1854" y="1055" width="1" height="1" fill="#1c1d1d"/><rect x="1860" y="1055" width="1" height="1" fill="#1c1d1d"/><rect x="1865" y="1055" width="1" height="1" fill="#1c1d1d"/><rect x="1867" y="1055" width="1" height="1" fill="#1c1d1d"/><rect x="1878" y="1055" width="1" height="1" fill="#1c1d1d"/><rect x="1887" y="1055" width="1" height="1" fill="#1c1d1d"/><rect x="1889" y="1055" width="1" height="1" fill="#1c1d1d"/><rect x="1892" y="1055" width="1" height="1" fill="#1c1d1d"/><rect x="1895" y="1055" width="1" height="1" fill="#1c1d1d"/><rect x="1896" y="1055" width="1" height="1" fill="#1c1d1d"/><rect x="1903" y="1055" width="1" height="1" fill="#1c1d1d"/><rect x="1905" y="1055" width="1" height="1" fill="#1c1d1d"/><rect x="1857" y="1056" width="1" height="1" fill="#1c1d1d"/><rect x="1862" y="1056" width="1" height="1" fill="#1c1d1d"/><rect x="1882" y="1056" width="1" height="1" fill="#1c1d1d"/><rect x="1884" y="1056" width="1" height="1" fill="#1c1d1d"/><rect x="1892" y="1056" width="1" height="1" fill="#1c1d1d"/><rect x="1893" y="1056" width="1" height="1" fill="#1c1d1d"/><rect x="1894" y="1056" width="1" height="1" fill="#1c1d1d"/><rect x="1901" y="1056" width="1" height="1" fill="#1c1d1d"/><rect x="1906" y="1056" width="1" height="1" fill="#1c1d1d"/><rect x="1909" y="1056" width="1" height="1" fill="#1c1d1d"/><rect x="1911" y="1056" width="1" height="1" fill="#1c1d1d"/><rect x="1912" y="1056" width="1" height="1" fill="#1c1d1d"/><rect x="1855" y="1057" width="1" height="1" fill="#1c1d1d"/><rect x="1865" y="1057" width="1" height="1" fill="#1c1d1d"/><rect x="1869" y="1057" width="1" height="1" fill="#1c1d1d"/><rect x="1870" y="1057" width="1" height="1" fill="#1c1d1d"/><rect x="1871" y="1057" width="1" height="1" fill="#1c1d1d"/><rect x="1873" y="1057" width="1" height="1" fill="#1c1d1d"/><rect x="1882" y="1057" width="1" height="1" fill="#1c1d1d"/><rect x="1883" y="1057" width="1" height="1" fill="#1c1d1d"/><rect x="1884" y="1057" width="1" height="1" fill="#1c1d1d"/><rect x="1888" y="1057" width="1" height="1" fill="#1c1d1d"/><rect x="1894" y="1057" width="1" height="1" fill="#1c1d1d"/><rect x="1895" y="1057" width="1" height="1" fill="#1c1d1d"/><rect x="1898" y="1057" width="1" height="1" fill="#1c1d1d"/><rect x="1899" y="1057" width="1" height="1" fill="#1c1d1d"/><rect x="1901" y="1057" width="1" height="1" fill="#1c1d1d"/><rect x="1909" y="1057" width="1" height="1" fill="#1c1d1d"/><rect x="1911" y="1057" width="1" height="1" fill="#1c1d1d"/><rect x="1914" y="1057" width="1" height="1" fill="#1c1d1d"/><rect x="1915" y="1057" width="1" height="1" fill="#1c1d1d"/><rect x="1854" y="1058" width="1" height="1" fill="#1c1d1d"/><rect x="1863" y="1058" width="1" height="1" fill="#1c1d1d"/><rect x="1865" y="1058" width="1" height="1" fill="#1c1d1d"/><rect x="1867" y="1058" width="1" height="1" fill="#1c1d1d"/><rect x="1871" y="1058" width="1" height="1" fill="#1c1d1d"/><rect x="1876" y="1058" width="1" height="1" fill="#1c1d1d"/><rect x="1877" y="1058" width="1" height="1" fill="#1c1d1d"/><rect x="1878" y="1058" width="1" height="1" fill="#1c1d1d"/><rect x="1884" y="1058" width="1" height="1" fill="#1c1d1d"/><rect x="1885" y="1058" width="1" height="1" fill="#1c1d1d"/><rect x="1886" y="1058" width="1" height="1" fill="#1c1d1d"/><rect x="1892" y="1058" width="1" height="1" fill="#1c1d1d"/><rect x="1895" y="1058" width="1" height="1" fill="#1c1d1d"/><rect x="1897" y="1058" width="1" height="1" fill="#1c1d1d"/><rect x="1899" y="1058" width="1" height="1" fill="#1c1d1d"/><rect x="1901" y="1058" width="1" height="1" fill="#1c1d1d"/><rect x="1903" y="1058" width="1" height="1" fill="#1c1d1d"/><rect x="1904" y="1058" width="1" height="1" fill="#1c1d1d"/><rect x="1906" y="1058" width="1" height="1" fill="#1c1d1d"/><rect x="1914" y="1058" width="1" height="1" fill="#1c1d1d"/><rect x="1916" y="1058" width="1" height="1" fill="#1c1d1d"/><rect x="1917" y="1058" width="1" height="1" fill="#1c1d1d"/><rect x="1857" y="1059" width="1" height="1" fill="#1c1d1d"/><rect x="1862" y="1059" width="1" height="1" fill="#1c1d1d"/><rect x="1872" y="1059" width="1" height="1" fill="#1c1d1d"/><rect x="1878" y="1059" width="1" height="1" fill="#1c1d1d"/><rect x="1881" y="1059" width="1" height="1" fill="#1c1d1d"/><rect x="1882" y="1059" width="1" height="1" fill="#1c1d1d"/><rect x="1883" y="1059" width="1" height="1" fill="#1c1d1d"/><rect x="1888" y="1059" width="1" height="1" fill="#1c1d1d"/><rect x="1890" y="1059" width="1" height="1" fill="#1c1d1d"/><rect x="1895" y="1059" width="1" height="1" fill="#1c1d1d"/><rect x="1896" y="1059" width="1" height="1" fill="#1c1d1d"/><rect x="1898" y="1059" width="1" height="1" fill="#1c1d1d"/><rect x="1901" y="1059" width="1" height="1" fill="#1c1d1d"/><rect x="1902" y="1059" width="1" height="1" fill="#1c1d1d"/><rect x="1904" y="1059" width="1" height="1" fill="#1c1d1d"/><rect x="1913" y="1059" width="1" height="1" fill="#1c1d1d"/><rect x="1916" y="1059" width="1" height="1" fill="#1c1d1d"/><rect x="1855" y="1060" width="1" height="1" fill="#1c1d1d"/><rect x="1856" y="1060" width="1" height="1" fill="#1c1d1d"/><rect x="1858" y="1060" width="1" height="1" fill="#1c1d1d"/><rect x="1860" y="1060" width="1" height="1" fill="#1c1d1d"/><rect x="1861" y="1060" width="1" height="1" fill="#1c1d1d"/><rect x="1863" y="1060" width="1" height="1" fill="#1c1d1d"/><rect x="1874" y="1060" width="1" height="1" fill="#1c1d1d"/><rect x="1875" y="1060" width="1" height="1" fill="#1c1d1d"/><rect x="1880" y="1060" width="1" height="1" fill="#1c1d1d"/><rect x="1882" y="1060" width="1" height="1" fill="#1c1d1d"/><rect x="1884" y="1060" width="1" height="1" fill="#1c1d1d"/><rect x="1887" y="1060" width="1" height="1" fill="#1c1d1d"/><rect x="1889" y="1060" width="1" height="1" fill="#1c1d1d"/><rect x="1891" y="1060" width="1" height="1" fill="#1c1d1d"/><rect x="1892" y="1060" width="1" height="1" fill="#1c1d1d"/><rect x="1899" y="1060" width="1" height="1" fill="#1c1d1d"/><rect x="1903" y="1060" width="1" height="1" fill="#1c1d1d"/><rect x="1907" y="1060" width="1" height="1" fill="#1c1d1d"/><rect x="1908" y="1060" width="1" height="1" fill="#1c1d1d"/><rect x="1910" y="1060" width="1" height="1" fill="#1c1d1d"/><rect x="1912" y="1060" width="1" height="1" fill="#1c1d1d"/><rect x="1858" y="1061" width="1" height="1" fill="#e8e8e8"/><rect x="1867" y="1061" width="1" height="1" fill="#b8c9a0"/><rect x="1890" y="1061" width="1" height="1" fill="#e8e8e8"/><rect x="1854" y="1062" width="1" height="1" fill="#b8c9a0"/><rect x="1887" y="1063" width="1" height="1" fill="#b8c9a0"/><rect x="1914" y="1064" width="1" height="1" fill="#e8e8e8"/><rect x="1869" y="1065" width="1" height="1" fill="#e8e8e8"/><rect x="1864" y="1066" width="1" height="1" fill="#b8c9a0"/><rect x="1884" y="1068" width="1" height="1" fill="#b8c9a0"/><rect x="1891" y="1068" width="1" height="1" fill="#b8c9a0"/><rect x="1905" y="1068" width="1" height="1" fill="#b8c9a0"/><rect x="1855" y="1070" width="1" height="1" fill="#b8c9a0"/><rect x="1864" y="1070" width="1" height="1" fill="#e8e8e8"/><rect x="1882" y="1071" width="1" height="1" fill="#b8c9a0"/><rect x="1876" y="1072" width="1" height="1" fill="#e8e8e8"/><rect x="1892" y="1072" width="1" height="1" fill="#b8c9a0"/><rect x="1869" y="1073" width="1" height="1" fill="#b8c9a0"/><rect x="1865" y="1074" width="1" height="1" fill="#b8c9a0"/><rect x="1874" y="1074" width="1" height="1" fill="#b8c9a0"/><rect x="1872" y="1075" width="1" height="1" fill="#e8e8e8"/><rect x="1884" y="1075" width="1" height="1" fill="#b8c9a0"/><rect x="1915" y="1078" width="1" height="1" fill="#b8c9a0"/><rect x="1879" y="1080" width="1" height="1" fill="#e8e8e8"/><rect x="1880" y="1081" width="1" height="1" fill="#b8c9a0"/><rect x="1905" y="1082" width="1" height="1" fill="#b8c9a0"/><rect x="1882" y="1083" width="1" height="1" fill="#b8c9a0"/><rect x="1858" y="1086" width="1" height="1" fill="#e8e8e8"/><rect x="1898" y="1086" width="1" height="1" fill="#b8c9a0"/><rect x="1857" y="1087" width="1" height="1" fill="#b8c9a0"/><rect x="1877" y="1087" width="1" height="1" fill="#e8e8e8"/><rect x="1858" y="1089" width="1" height="1" fill="#e8e8e8"/><rect x="1862" y="1089" width="1" height="1" fill="#b8c9a0"/><rect x="1872" y="1089" width="1" height="1" fill="#e8e8e8"/><rect x="1874" y="1089" width="1" height="1" fill="#e8e8e8"/><rect x="1912" y="1089" width="1" height="1" fill="#b8c9a0"/><rect x="1883" y="1090" width="1" height="1" fill="#e8e8e8"/><rect x="1911" y="1090" width="1" height="1" fill="#b8c9a0"/><rect x="1857" y="1091" width="1" height="1" fill="#e8e8e8"/><rect x="1864" y="1091" width="1" height="1" fill="#b8c9a0"/><rect x="1858" y="1092" width="1" height="1" fill="#b8c9a0"/><rect x="1872" y="1092" width="1" height="1" fill="#b8c9a0"/><rect x="1881" y="1092" width="1" height="1" fill="#e8e8e8"/><rect x="1916" y="1092" width="1" height="1" fill="#e8e8e8"/><rect x="1887" y="1093" width="1" height="1" fill="#e8e8e8"/><rect x="1888" y="1093" width="1" height="1" fill="#b8c9a0"/><rect x="1909" y="1093" width="1" height="1" fill="#e8e8e8"/><rect x="1912" y="1094" width="1" height="1" fill="#e8e8e8"/><rect x="1870" y="1096" width="1" height="1" fill="#b8c9a0"/><rect x="1871" y="1096" width="1" height="1" fill="#b8c9a0"/><rect x="1897" y="1098" width="1" height="1" fill="#b8c9a0"/><rect x="1866" y="1100" width="1" height="1" fill="#b8c9a0"/><rect x="1860" y="1103" width="1" height="1" fill="#b8c9a0"/><rect x="1897" y="1104" width="1" height="1" fill="#b8c9a0"/><rect x="1913" y="1104" width="1" height="1" fill="#e8e8e8"/><rect x="1868" y="1105" width="1" height="1" fill="#b8c9a0"/><rect x="1873" y="1106" width="1" height="1" fill="#b8c9a0"/><rect x="1890" y="1107" width="1" height="1" fill="#e8e8e8"/><rect x="1867" y="1108" width="1" height="1" fill="#b8c9a0"/><rect x="1893" y="1108" width="1" height="1" fill="#b8c9a0"/><rect x="1903" y="1109" width="1" height="1" fill="#b8c9a0"/><rect x="1914" y="1109" width="1" height="1" fill="#e8e8e8"/><rect x="1884" y="1111" width="1" height="1" fill="#b8c9a0"/><rect x="1904" y="1111" width="1" height="1" fill="#e8e8e8"/><rect x="1915" y="1112" width="1" height="1" fill="#b8c9a0"/><rect x="1887" y="1113" width="1" height="1" fill="#b8c9a0"/><rect x="1906" y="1114" width="1" height="1" fill="#b8c9a0"/><rect x="1867" y="1119" width="1" height="1" fill="#e8e8e8"/><rect x="1880" y="1120" width="1" height="1" fill="#b8c9a0"/><rect x="1907" y="1120" width="1" height="1" fill="#b8c9a0"/><rect x="1862" y="1121" width="1" height="1" fill="#b8c9a0"/><rect x="1885" y="1121" width="1" height="1" fill="#e8e8e8"/><rect x="1862" y="1122" width="1" height="1" fill="#b8c9a0"/><rect x="1863" y="1122" width="1" height="1" fill="#b8c9a0"/><rect x="1873" y="1122" width="1" height="1" fill="#b8c9a0"/><rect x="1894" y="1122" width="1" height="1" fill="#b8c9a0"/><rect x="1884" y="1123" width="1" height="1" fill="#e8e8e8"/><rect x="1900" y="1123" width="1" height="1" fill="#e8e8e8"/><rect x="1862" y="1125" width="1" height="1" fill="#e8e8e8"/><rect x="1910" y="1125" width="1" height="1" fill="#b8c9a0"/><rect x="1881" y="1126" width="1" height="1" fill="#b8c9a0"/><rect x="1882" y="1126" width="1" height="1" fill="#b8c9a0"/><rect x="1893" y="1126" width="1" height="1" fill="#b8c9a0"/><rect x="1908" y="1126" width="1" height="1" fill="#e8e8e8"/><rect x="1860" y="1127" width="1" height="1" fill="#b8c9a0"/><rect x="1893" y="1129" width="1" height="1" fill="#e8e8e8"/><rect x="1903" y="1129" width="1" height="1" fill="#e8e8e8"/><rect x="1909" y="1129" width="1" height="1" fill="#b8c9a0"/><rect x="1882" y="1130" width="1" height="1" fill="#b8c9a0"/><rect x="1913" y="1130" width="1" height="1" fill="#b8c9a0"/><rect x="1855" y="1131" width="1" height="1" fill="#b8c9a0"/><rect x="1917" y="1131" width="1" height="1" fill="#b8c9a0"/><rect x="1863" y="1132" width="1" height="1" fill="#b8c9a0"/><rect x="1887" y="1132" width="1" height="1" fill="#e8e8e8"/><rect x="1873" y="1134" width="1" height="1" fill="#b8c9a0"/><rect x="1883" y="1134" width="1" height="1" fill="#b8c9a0"/><rect x="1903" y="1135" width="1" height="1" fill="#b8c9a0"/><rect x="1854" y="1096" width="64" height="2" fill="#9a9c9e"/><rect x="1864" y="1110" width="13" height="2" fill="#ffffff"/><rect x="1891" y="54" width="3" height="603" fill="#bccbd3"/><rect x="1895" y="54" width="3" height="603" fill="#bccbd3"/><rect x="1894" y="54" width="1" height="603" fill="#44505a"/><rect x="1891" y="657" width="7" height="10" fill="#3a4650"/><rect x="1891" y="667" width="3" height="211" fill="#bccbd3"/><rect x="1895" y="667" width="3" height="211" fill="#bccbd3"/><rect x="1894" y="667" width="1" height="211" fill="#44505a"/><rect x="1891" y="878" width="3" height="258" fill="#57758e"/><rect x="1895" y="878" width="3" height="258" fill="#57758e"/><rect x="1894" y="878" width="1" height="258" fill="#263038"/></svg>
<div class="r" style="left:0px;top:1136px;width:1918px;height:28px;background:#2e2f31;"></div>
<svg style="left:0;top:0" width="1" height="1"><polygon points="1738.6,1145.2 1746.2,1159 1732.6,1159" fill="#b4b5b8"/><polygon points="1737.7,1144.2 1744.4,1157.8 1731,1157.8" fill="#ffff00" stroke="#d8d800" stroke-width="0.6" stroke-linejoin="round"/><path d="M1736.8,1148 h1.9 l-0.4,5.2 h-1.1 Z" fill="#000"/><rect x="1736.9" y="1154.3" width="1.7" height="1.6" rx="0.6" fill="#000"/></svg>
<div class="t s" style="left:1749px;top:1141px;font-size:15px;color:#dde1e6;">3</div>
<div class="t s" style="left:1791px;top:1141px;font-size:15px;color:#dde1e6;">0x100010a0</div>
<svg style="left:0;top:0" width="1" height="1"><rect x="1905" y="1161" width="1.5" height="1.5" fill="#5a5b5d"/><rect x="1908" y="1161" width="1.5" height="1.5" fill="#5a5b5d"/><rect x="1911" y="1161" width="1.5" height="1.5" fill="#5a5b5d"/><rect x="1914" y="1161" width="1.5" height="1.5" fill="#5a5b5d"/><rect x="1908" y="1158" width="1.5" height="1.5" fill="#5a5b5d"/><rect x="1911" y="1158" width="1.5" height="1.5" fill="#5a5b5d"/><rect x="1914" y="1158" width="1.5" height="1.5" fill="#5a5b5d"/><rect x="1911" y="1155" width="1.5" height="1.5" fill="#5a5b5d"/><rect x="1914" y="1155" width="1.5" height="1.5" fill="#5a5b5d"/><rect x="1914" y="1152" width="1.5" height="1.5" fill="#5a5b5d"/></svg>
</div></body></html>
